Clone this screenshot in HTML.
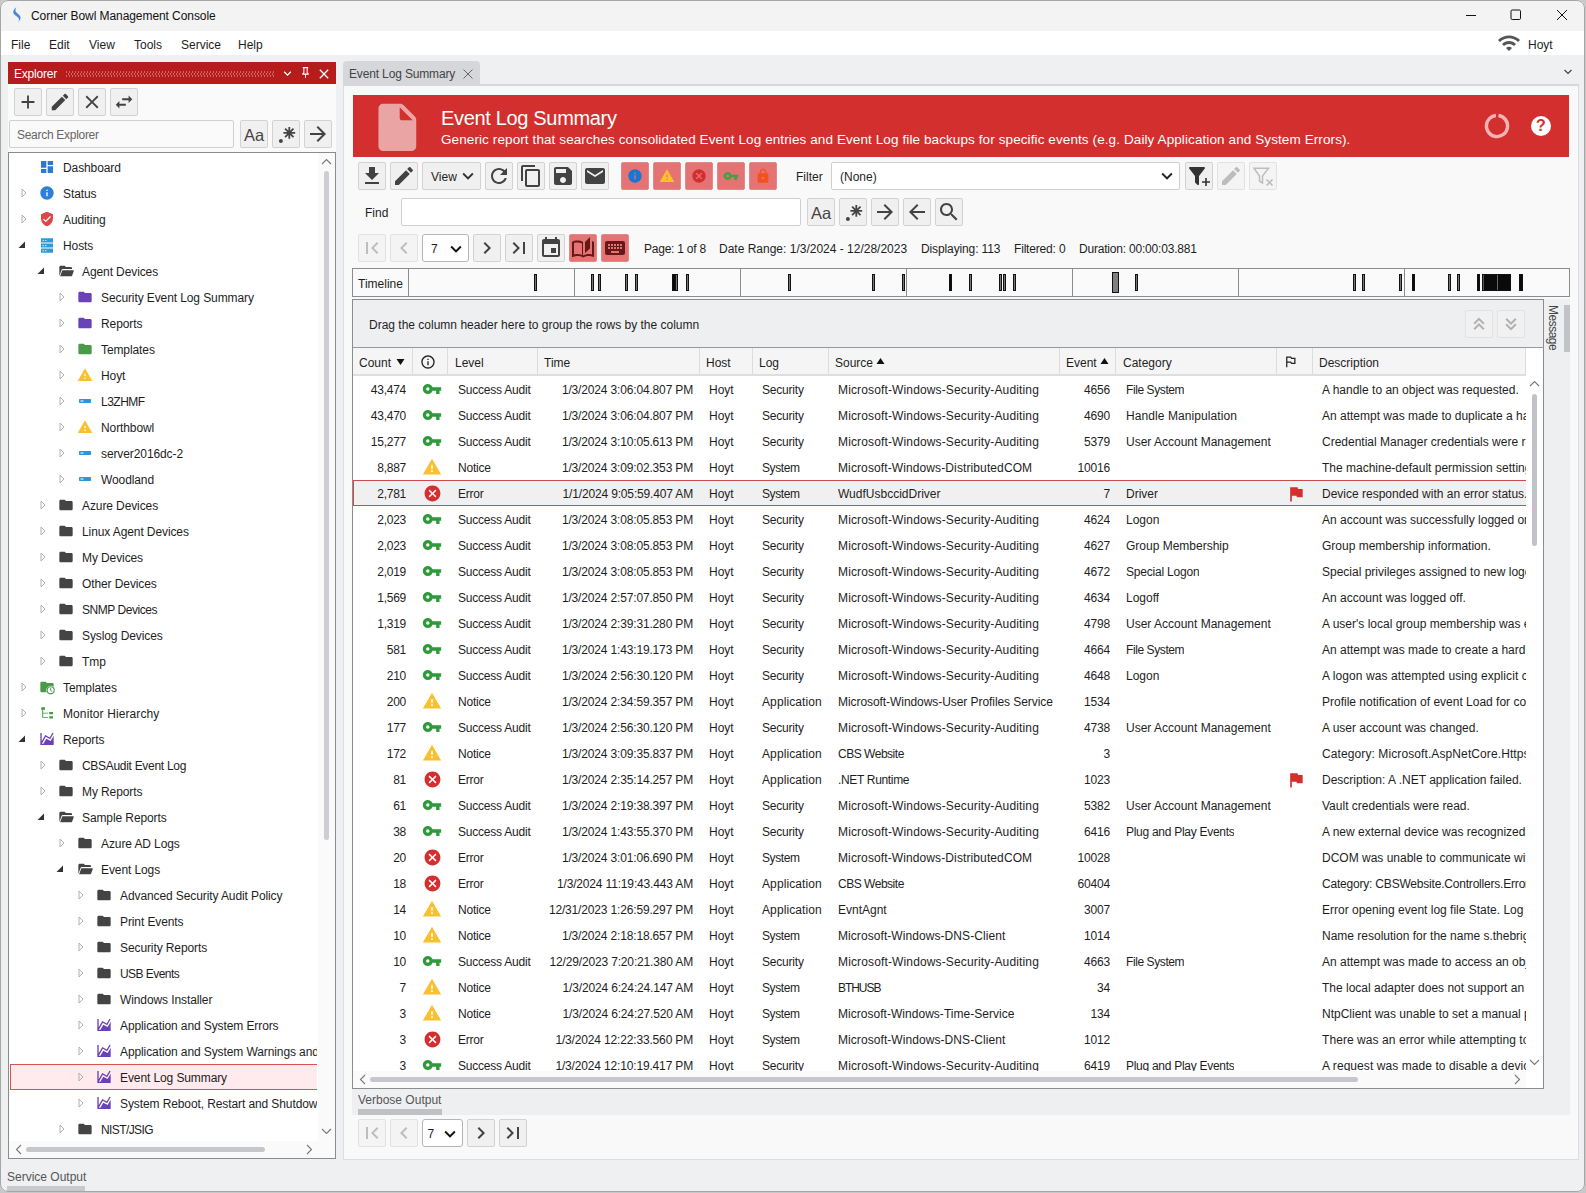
<!DOCTYPE html><html><head><meta charset="utf-8"><title>Corner Bowl Management Console</title><style>
*{box-sizing:border-box;margin:0;padding:0}
html,body{width:1586px;height:1193px;overflow:hidden;background:#eef0f2}
body{font-family:"Liberation Sans",sans-serif;font-size:12px;color:#1e1e1e;position:relative}
.a{position:absolute}
.ic{position:absolute;display:block}
.t{position:absolute;white-space:nowrap;line-height:16px;height:16px}
.btn{position:absolute;width:28px;height:28px;background:#f0f0f0;border:1px solid #d2d2d2;border-radius:2px}
.btn.dis{background:#f4f4f4;border-color:#e2e2e2}
.btn.tog{background:#e57373;border-color:#e08a8a}
.btn .ic{left:1px;top:1px}
.row{position:absolute;left:0;height:26px;width:100%}
.c{position:absolute;top:6px;height:16px;line-height:16px;white-space:nowrap;overflow:hidden}
.r{text-align:right}
.tr{position:absolute;left:0;width:308px;height:26px;letter-spacing:-0.100px}
.hd{position:absolute;top:0;height:26px;border-right:1px solid #dcdcdc}
.hd span{position:absolute;top:7px;left:6px;line-height:16px;white-space:nowrap}
.tick{position:absolute;top:7px;height:16px;background:#111;border:1px solid #444}
</style></head><body>
<div class="a" style="left:0px;top:0px;width:1586px;height:31px;background:#f3f3f3"></div>
<div class="a" style="left:0px;top:31px;width:1586px;height:24px;background:#fff"></div>
<svg class="ic" style="left:0;top:0" width="30" height="30" viewBox="0 0 30 30"><path d="M16.500 7C14 9 12.500 11.500 13.500 13.500C14.500 15.500 18 16.500 18.800 18.500C19.300 19.800 18.800 21 18 22.200C20 20.500 21 18.500 20.300 16.500C19.500 14.300 16.300 13.300 15.600 11.300C15.200 10 15.600 8.500 16.500 7Z" fill="#4a8ad4"/></svg>
<div class="t" style="left:31px;top:8px;color:#111;letter-spacing:-0.070px">Corner Bowl Management Console</div>
<div class="a" style="left:1466px;top:15px;width:10px;height:1px;background:#111"></div>
<svg class="ic" style="left:1510px;top:9px" width="12" height="12" viewBox="0 0 12 12"><rect x="1" y="1" width="9.500" height="9.500" rx="1.200" stroke="#111" stroke-width="1" fill="none"/></svg>
<svg class="ic" style="left:1556px;top:9px" width="12" height="12" viewBox="0 0 12 12"><path d="M1 1l10 10M11 1L1 11" stroke="#111" stroke-width="1" fill="none"/></svg>
<div class="t" style="left:11px;top:37px;">File</div>
<div class="t" style="left:49px;top:37px;">Edit</div>
<div class="t" style="left:89px;top:37px;">View</div>
<div class="t" style="left:134px;top:37px;">Tools</div>
<div class="t" style="left:181px;top:37px;">Service</div>
<div class="t" style="left:238px;top:37px;">Help</div>
<svg class="ic" style="left:1496.5px;top:31px" width="24" height="24" viewBox="0 0 24 24"><path fill="#555" d="M1 9l2 2c4.97-4.97 13.03-4.97 18 0l2-2C16.93 2.93 7.08 2.93 1 9zm8 8l3 3 3-3c-1.65-1.66-4.34-1.66-6 0zm-4-4l2 2c2.76-2.76 7.24-2.76 10 0l2-2C15.14 9.14 8.87 9.14 5 13z"/></svg>
<div class="t" style="left:1528px;top:37px;">Hoyt</div>
<div class="a" style="left:8px;top:62px;width:328px;height:1097px;background:#fafafa"></div>
<div class="a" style="left:8px;top:62px;width:328px;height:22px;background:#b71c1c"></div>
<div class="t" style="left:14px;top:66px;color:#fff;letter-spacing:-0.200px">Explorer</div>
<div class="a" style="left:66px;top:71px;width:209px;height:6px;background-image:radial-gradient(circle at 0.750px 1px,#dc7c7c 0.500px,transparent 0.750px),radial-gradient(circle at 2.250px 3px,#dc7c7c 0.500px,transparent 0.750px);background-size:3px 4px"></div>
<svg class="ic" style="left:279.5px;top:66px" width="15" height="15" viewBox="0 0 24 24"><path fill="#fff" d="M7.41 8.59L12 13.17l4.59-4.58L18 10l-6 6-6-6 1.41-1.41z"/></svg>
<svg class="ic" style="left:298.5px;top:65.5px" width="13" height="13" viewBox="0 0 24 24"><path fill="#fff" d="M16,12V4H17V2H7V4H8V12L6,14V16H11.2V22H12.8V16H18V14L16,12M8.8,14L10,12.8V4H14V12.8L15.2,14H8.800Z"/></svg>
<svg class="ic" style="left:316px;top:65.5px" width="16" height="16" viewBox="0 0 24 24"><path fill="#fff" d="M19 6.41L17.59 5 12 10.59 6.41 5 5 6.41 10.59 12 5 17.59 6.41 19 12 13.41 17.59 19 19 17.59 13.41 12z"/></svg>
<div class="btn " style="left:14px;top:88px;width:28px">
<svg class="ic" style="left:2px;top:2px" width="22" height="22" viewBox="0 0 24 24"><path fill="#424242" d="M19 13h-6v6h-2v-6H5v-2h6V5h2v6h6v2z"/></svg>
</div>
<div class="btn " style="left:46px;top:88px;width:28px">
<svg class="ic" style="left:2px;top:2px" width="22" height="22" viewBox="0 0 24 24"><path fill="#424242" d="M3 17.25V21h3.75L17.81 9.94l-3.75-3.75L3 17.25zM20.71 7.04c.39-.39.39-1.02 0-1.41l-2.34-2.34c-.39-.39-1.02-.39-1.41 0l-1.83 1.83 3.75 3.75 1.83-1.83z"/></svg>
</div>
<div class="btn " style="left:78px;top:88px;width:28px">
<svg class="ic" style="left:2px;top:2px" width="22" height="22" viewBox="0 0 24 24"><path fill="#424242" d="M19 6.41L17.59 5 12 10.59 6.41 5 5 6.41 10.59 12 5 17.59 6.41 19 12 13.41 17.59 19 19 17.59 13.41 12z"/></svg>
</div>
<div class="btn " style="left:110px;top:88px;width:28px">
<svg class="ic" style="left:2px;top:2px" width="22" height="22" viewBox="0 0 24 24"><path fill="#424242" d="M6.99 11L3 15l3.99 4v-3H14v-2H6.99v-3zM21 9l-3.99-4v3H10v2h7.01v3L21 9z"/></svg>
</div>
<div class="a" style="left:9px;top:120px;width:225px;height:28px;background:#fafafa;border:1px solid #d0d0d0;border-radius:2px"></div>
<div class="t" style="left:17px;top:127px;color:#666;letter-spacing:-0.290px">Search Explorer</div>
<div class="btn " style="left:240px;top:120px;width:28px">
<div class="t" style="left:3px;top:4px;font-size:16.500px;line-height:20px;height:20px;color:#444">Aa</div>
</div>
<div class="btn " style="left:272px;top:120px;width:28px">
<svg class="ic" style="left:1px;top:1px" width="24" height="24" viewBox="0 0 24 24"><circle cx="6.900" cy="18.900" r="2" fill="#444"/><path d="M15.300 5v11.800M9.400 10.900h11.800M11.100 6.700l8.400 8.400M19.500 6.700l-8.400 8.400" stroke="#444" stroke-width="1.800" fill="none"/></svg>
</div>
<div class="btn " style="left:304px;top:120px;width:28px">
<svg class="ic" style="left:1px;top:1px" width="24" height="24" viewBox="0 0 24 24"><path fill="#424242" d="M12 4l-1.41 1.41L16.17 11H4v2h12.17l-5.58 5.59L12 20l8-8z"/></svg>
</div>
<div class="a" style="left:8px;top:152px;width:328px;height:1007px;background:#fff;border:1px solid #8c8c8c"></div>
<div class="a" style="left:10px;top:154px;width:307px;height:987px;overflow:hidden">
<div class="tr" style="top:0px;">
<svg class="ic" style="left:29px;top:5px" width="16" height="16" viewBox="0 0 24 24"><path fill="#2979d6" d="M3 13h8V3H3v10zm0 8h8v-6H3v6zm10 0h8V11h-8v10zm0-18v6h8V3h-8z"/></svg>
<div class="t" style="left:53px;top:6px">Dashboard</div>
</div>
<div class="tr" style="top:26px;">
<svg class="ic" style="left:9px;top:7px" width="10" height="12" viewBox="0 0 10 12"><path d="M3 2L7 6 3 10z" fill="none" stroke="#b0b0b0" stroke-width="1"/></svg>
<svg class="ic" style="left:29px;top:5px" width="16" height="16" viewBox="0 0 24 24"><path fill="#2d7fd8" d="M12 2C6.48 2 2 6.48 2 12s4.48 10 10 10 10-4.48 10-10S17.52 2 12 2zm1 15h-2v-6h2v6zm0-8h-2V7h2v2z"/></svg>
<div class="t" style="left:53px;top:6px">Status</div>
</div>
<div class="tr" style="top:52px;">
<svg class="ic" style="left:9px;top:7px" width="10" height="12" viewBox="0 0 10 12"><path d="M3 2L7 6 3 10z" fill="none" stroke="#b0b0b0" stroke-width="1"/></svg>
<svg class="ic" style="left:29px;top:5px" width="16" height="16" viewBox="0 0 24 24"><path fill="#e04545" d="M12 1L3 5v6c0 5.55 3.84 10.74 9 12 5.16-1.26 9-6.45 9-12V5l-9-4zm-2 16l-4-4 1.41-1.41L10 14.17l6.59-6.59L18 9l-8 8z"/></svg>
<div class="t" style="left:53px;top:6px">Auditing</div>
</div>
<div class="tr" style="top:78px;">
<svg class="ic" style="left:7px;top:8px" width="10" height="10" viewBox="0 0 10 10"><path d="M8 1.500V8H1.500z" fill="#333"/></svg>
<svg class="ic" style="left:31px;top:6px" width="12" height="15" viewBox="0 0 12 15"><path fill="#2d9bd8" d="M0 .3h12v4.200H0zM0 5.400h12v4.200H0zM0 10.500h12v4.200H0z"/><path fill="#b5e0f5" d="M1.500 1.900h1.500v1.200H1.500zM4 1.900h1.500v1.200H4zM1.500 7h1.500v1.200H1.500zM4 7h1.500v1.200H4zM1.500 12.100h1.500v1.200H1.500zM4 12.100h1.500v1.200H4z"/></svg>
<div class="t" style="left:53px;top:6px">Hosts</div>
</div>
<div class="tr" style="top:104px;">
<svg class="ic" style="left:26px;top:8px" width="10" height="10" viewBox="0 0 10 10"><path d="M8 1.500V8H1.500z" fill="#333"/></svg>
<svg class="ic" style="left:48px;top:5px" width="16" height="16" viewBox="0 0 24 24"><path fill="#444" d="M2 6c0-1.1.9-2 2-2h6l2 2h7c1.1 0 2 .9 2 2v1H7.2c-.9 0-1.7.6-1.95 1.45L2 19.5V6zM3.2 20l3.1-8.6c.15-.25.45-.4.8-.4H23c.5 0 .85.5.7 1l-2.6 7.3c-.15.4-.55.7-1 .7H3.2z"/></svg>
<div class="t" style="left:72px;top:6px">Agent Devices</div>
</div>
<div class="tr" style="top:130px;">
<svg class="ic" style="left:47px;top:7px" width="10" height="12" viewBox="0 0 10 12"><path d="M3 2L7 6 3 10z" fill="none" stroke="#b0b0b0" stroke-width="1"/></svg>
<svg class="ic" style="left:67px;top:5px" width="16" height="16" viewBox="0 0 24 24"><path fill="#6a42b8" d="M10 4H4c-1.1 0-1.99.9-1.99 2L2 18c0 1.1.9 2 2 2h16c1.1 0 2-.9 2-2V8c0-1.1-.9-2-2-2h-8l-2-2z"/></svg>
<div class="t" style="left:91px;top:6px">Security Event Log Summary</div>
</div>
<div class="tr" style="top:156px;">
<svg class="ic" style="left:47px;top:7px" width="10" height="12" viewBox="0 0 10 12"><path d="M3 2L7 6 3 10z" fill="none" stroke="#b0b0b0" stroke-width="1"/></svg>
<svg class="ic" style="left:67px;top:5px" width="16" height="16" viewBox="0 0 24 24"><path fill="#6a42b8" d="M10 4H4c-1.1 0-1.99.9-1.99 2L2 18c0 1.1.9 2 2 2h16c1.1 0 2-.9 2-2V8c0-1.1-.9-2-2-2h-8l-2-2z"/></svg>
<div class="t" style="left:91px;top:6px">Reports</div>
</div>
<div class="tr" style="top:182px;">
<svg class="ic" style="left:47px;top:7px" width="10" height="12" viewBox="0 0 10 12"><path d="M3 2L7 6 3 10z" fill="none" stroke="#b0b0b0" stroke-width="1"/></svg>
<svg class="ic" style="left:67px;top:5px" width="16" height="16" viewBox="0 0 24 24"><path fill="#4a9a4a" d="M10 4H4c-1.1 0-1.99.9-1.99 2L2 18c0 1.1.9 2 2 2h16c1.1 0 2-.9 2-2V8c0-1.1-.9-2-2-2h-8l-2-2z"/></svg>
<div class="t" style="left:91px;top:6px">Templates</div>
</div>
<div class="tr" style="top:208px;">
<svg class="ic" style="left:47px;top:7px" width="10" height="12" viewBox="0 0 10 12"><path d="M3 2L7 6 3 10z" fill="none" stroke="#b0b0b0" stroke-width="1"/></svg>
<svg class="ic" style="left:67px;top:5px" width="16" height="16" viewBox="0 0 24 24"><path fill="#fbc02d" d="M1 21h22L12 2 1 21zm12-3h-2v-2h2v2zm0-4h-2v-4h2v4z"/></svg>
<div class="t" style="left:91px;top:6px">Hoyt</div>
</div>
<div class="tr" style="top:234px;">
<svg class="ic" style="left:47px;top:7px" width="10" height="12" viewBox="0 0 10 12"><path d="M3 2L7 6 3 10z" fill="none" stroke="#b0b0b0" stroke-width="1"/></svg>
<svg class="ic" style="left:67px;top:5px" width="16" height="16" viewBox="0 0 24 24"><path fill="#2d96d8" d="M4 9h16c.55 0 1 .45 1 1v4c0 .55-.45 1-1 1H4c-.55 0-1-.45-1-1v-4c0-.55.45-1 1-1zm1.500 2v2h1.500v-2zm2.500 0v2h1.500v-2z"/></svg>
<div class="t" style="left:91px;top:6px;letter-spacing:-0.500px">L3ZHMF</div>
</div>
<div class="tr" style="top:260px;">
<svg class="ic" style="left:47px;top:7px" width="10" height="12" viewBox="0 0 10 12"><path d="M3 2L7 6 3 10z" fill="none" stroke="#b0b0b0" stroke-width="1"/></svg>
<svg class="ic" style="left:67px;top:5px" width="16" height="16" viewBox="0 0 24 24"><path fill="#fbc02d" d="M1 21h22L12 2 1 21zm12-3h-2v-2h2v2zm0-4h-2v-4h2v4z"/></svg>
<div class="t" style="left:91px;top:6px">Northbowl</div>
</div>
<div class="tr" style="top:286px;">
<svg class="ic" style="left:47px;top:7px" width="10" height="12" viewBox="0 0 10 12"><path d="M3 2L7 6 3 10z" fill="none" stroke="#b0b0b0" stroke-width="1"/></svg>
<svg class="ic" style="left:67px;top:5px" width="16" height="16" viewBox="0 0 24 24"><path fill="#2d96d8" d="M4 9h16c.55 0 1 .45 1 1v4c0 .55-.45 1-1 1H4c-.55 0-1-.45-1-1v-4c0-.55.45-1 1-1zm1.500 2v2h1.500v-2zm2.500 0v2h1.500v-2z"/></svg>
<div class="t" style="left:91px;top:6px">server2016dc-2</div>
</div>
<div class="tr" style="top:312px;">
<svg class="ic" style="left:47px;top:7px" width="10" height="12" viewBox="0 0 10 12"><path d="M3 2L7 6 3 10z" fill="none" stroke="#b0b0b0" stroke-width="1"/></svg>
<svg class="ic" style="left:67px;top:5px" width="16" height="16" viewBox="0 0 24 24"><path fill="#2d96d8" d="M4 9h16c.55 0 1 .45 1 1v4c0 .55-.45 1-1 1H4c-.55 0-1-.45-1-1v-4c0-.55.45-1 1-1zm1.500 2v2h1.500v-2zm2.500 0v2h1.500v-2z"/></svg>
<div class="t" style="left:91px;top:6px">Woodland</div>
</div>
<div class="tr" style="top:338px;">
<svg class="ic" style="left:28px;top:7px" width="10" height="12" viewBox="0 0 10 12"><path d="M3 2L7 6 3 10z" fill="none" stroke="#b0b0b0" stroke-width="1"/></svg>
<svg class="ic" style="left:48px;top:5px" width="16" height="16" viewBox="0 0 24 24"><path fill="#444" d="M10 4H4c-1.1 0-1.99.9-1.99 2L2 18c0 1.1.9 2 2 2h16c1.1 0 2-.9 2-2V8c0-1.1-.9-2-2-2h-8l-2-2z"/></svg>
<div class="t" style="left:72px;top:6px">Azure Devices</div>
</div>
<div class="tr" style="top:364px;">
<svg class="ic" style="left:28px;top:7px" width="10" height="12" viewBox="0 0 10 12"><path d="M3 2L7 6 3 10z" fill="none" stroke="#b0b0b0" stroke-width="1"/></svg>
<svg class="ic" style="left:48px;top:5px" width="16" height="16" viewBox="0 0 24 24"><path fill="#444" d="M10 4H4c-1.1 0-1.99.9-1.99 2L2 18c0 1.1.9 2 2 2h16c1.1 0 2-.9 2-2V8c0-1.1-.9-2-2-2h-8l-2-2z"/></svg>
<div class="t" style="left:72px;top:6px">Linux Agent Devices</div>
</div>
<div class="tr" style="top:390px;">
<svg class="ic" style="left:28px;top:7px" width="10" height="12" viewBox="0 0 10 12"><path d="M3 2L7 6 3 10z" fill="none" stroke="#b0b0b0" stroke-width="1"/></svg>
<svg class="ic" style="left:48px;top:5px" width="16" height="16" viewBox="0 0 24 24"><path fill="#444" d="M10 4H4c-1.1 0-1.99.9-1.99 2L2 18c0 1.1.9 2 2 2h16c1.1 0 2-.9 2-2V8c0-1.1-.9-2-2-2h-8l-2-2z"/></svg>
<div class="t" style="left:72px;top:6px">My Devices</div>
</div>
<div class="tr" style="top:416px;">
<svg class="ic" style="left:28px;top:7px" width="10" height="12" viewBox="0 0 10 12"><path d="M3 2L7 6 3 10z" fill="none" stroke="#b0b0b0" stroke-width="1"/></svg>
<svg class="ic" style="left:48px;top:5px" width="16" height="16" viewBox="0 0 24 24"><path fill="#444" d="M10 4H4c-1.1 0-1.99.9-1.99 2L2 18c0 1.1.9 2 2 2h16c1.1 0 2-.9 2-2V8c0-1.1-.9-2-2-2h-8l-2-2z"/></svg>
<div class="t" style="left:72px;top:6px">Other Devices</div>
</div>
<div class="tr" style="top:442px;">
<svg class="ic" style="left:28px;top:7px" width="10" height="12" viewBox="0 0 10 12"><path d="M3 2L7 6 3 10z" fill="none" stroke="#b0b0b0" stroke-width="1"/></svg>
<svg class="ic" style="left:48px;top:5px" width="16" height="16" viewBox="0 0 24 24"><path fill="#444" d="M10 4H4c-1.1 0-1.99.9-1.99 2L2 18c0 1.1.9 2 2 2h16c1.1 0 2-.9 2-2V8c0-1.1-.9-2-2-2h-8l-2-2z"/></svg>
<div class="t" style="left:72px;top:6px;letter-spacing:-0.450px">SNMP Devices</div>
</div>
<div class="tr" style="top:468px;">
<svg class="ic" style="left:28px;top:7px" width="10" height="12" viewBox="0 0 10 12"><path d="M3 2L7 6 3 10z" fill="none" stroke="#b0b0b0" stroke-width="1"/></svg>
<svg class="ic" style="left:48px;top:5px" width="16" height="16" viewBox="0 0 24 24"><path fill="#444" d="M10 4H4c-1.1 0-1.99.9-1.99 2L2 18c0 1.1.9 2 2 2h16c1.1 0 2-.9 2-2V8c0-1.1-.9-2-2-2h-8l-2-2z"/></svg>
<div class="t" style="left:72px;top:6px">Syslog Devices</div>
</div>
<div class="tr" style="top:494px;">
<svg class="ic" style="left:28px;top:7px" width="10" height="12" viewBox="0 0 10 12"><path d="M3 2L7 6 3 10z" fill="none" stroke="#b0b0b0" stroke-width="1"/></svg>
<svg class="ic" style="left:48px;top:5px" width="16" height="16" viewBox="0 0 24 24"><path fill="#444" d="M10 4H4c-1.1 0-1.99.9-1.99 2L2 18c0 1.1.9 2 2 2h16c1.1 0 2-.9 2-2V8c0-1.1-.9-2-2-2h-8l-2-2z"/></svg>
<div class="t" style="left:72px;top:6px">Tmp</div>
</div>
<div class="tr" style="top:520px;">
<svg class="ic" style="left:9px;top:7px" width="10" height="12" viewBox="0 0 10 12"><path d="M3 2L7 6 3 10z" fill="none" stroke="#b0b0b0" stroke-width="1"/></svg>
<svg class="ic" style="left:29px;top:5px" width="16" height="16" viewBox="0 0 24 24"><path fill="#4a9a4a" d="M10 4H4c-1.100 0-2 .9-2 2v12c0 1.100.9 2 2 2h7.500a7 7 0 0 1 10.500-8.500V8c0-1.100-.9-2-2-2h-8l-2-2z"/><circle cx="17.500" cy="17" r="5.300" fill="#fff" stroke="#4a9a4a" stroke-width="1.700"/><path d="M17.500 13.800V17.300l2.300 1.400" stroke="#4a9a4a" stroke-width="1.500" fill="none"/></svg>
<div class="t" style="left:53px;top:6px">Templates</div>
</div>
<div class="tr" style="top:546px;">
<svg class="ic" style="left:9px;top:7px" width="10" height="12" viewBox="0 0 10 12"><path d="M3 2L7 6 3 10z" fill="none" stroke="#b0b0b0" stroke-width="1"/></svg>
<svg class="ic" style="left:31px;top:7px" width="12" height="12" viewBox="0 0 12 12"><path fill="#4a9a4a" d="M.2.200h3.800v2.600H.2zM1.200 2.800h1v8h-1zM2.200 5.700h5v.9h-5zM2.200 9.900h5v.9h-5zM8.200 5h3.800v2.300H8.200zM8.200 9.200h3.800v2.300H8.200z"/></svg>
<div class="t" style="left:53px;top:6px;letter-spacing:0.100px">Monitor Hierarchy</div>
</div>
<div class="tr" style="top:572px;">
<svg class="ic" style="left:7px;top:8px" width="10" height="10" viewBox="0 0 10 10"><path d="M8 1.500V8H1.500z" fill="#333"/></svg>
<svg class="ic" style="left:29px;top:5px" width="16" height="16" viewBox="0 0 24 24"><path fill="#6a42b8" d="M17.45,15.18L22,7.31V19L22,21H2V3H4V15.54L9.5,6L16,9.78L20.24,2.45L21.97,3.45L16.74,12.5L10.23,8.75L4.31,19H6.57L10.96,11.44L17.45,15.18Z"/></svg>
<div class="t" style="left:53px;top:6px">Reports</div>
</div>
<div class="tr" style="top:598px;">
<svg class="ic" style="left:28px;top:7px" width="10" height="12" viewBox="0 0 10 12"><path d="M3 2L7 6 3 10z" fill="none" stroke="#b0b0b0" stroke-width="1"/></svg>
<svg class="ic" style="left:48px;top:5px" width="16" height="16" viewBox="0 0 24 24"><path fill="#444" d="M10 4H4c-1.1 0-1.99.9-1.99 2L2 18c0 1.1.9 2 2 2h16c1.1 0 2-.9 2-2V8c0-1.1-.9-2-2-2h-8l-2-2z"/></svg>
<div class="t" style="left:72px;top:6px;letter-spacing:-0.300px">CBSAudit Event Log</div>
</div>
<div class="tr" style="top:624px;">
<svg class="ic" style="left:28px;top:7px" width="10" height="12" viewBox="0 0 10 12"><path d="M3 2L7 6 3 10z" fill="none" stroke="#b0b0b0" stroke-width="1"/></svg>
<svg class="ic" style="left:48px;top:5px" width="16" height="16" viewBox="0 0 24 24"><path fill="#444" d="M10 4H4c-1.1 0-1.99.9-1.99 2L2 18c0 1.1.9 2 2 2h16c1.1 0 2-.9 2-2V8c0-1.1-.9-2-2-2h-8l-2-2z"/></svg>
<div class="t" style="left:72px;top:6px">My Reports</div>
</div>
<div class="tr" style="top:650px;">
<svg class="ic" style="left:26px;top:8px" width="10" height="10" viewBox="0 0 10 10"><path d="M8 1.500V8H1.500z" fill="#333"/></svg>
<svg class="ic" style="left:48px;top:5px" width="16" height="16" viewBox="0 0 24 24"><path fill="#444" d="M2 6c0-1.1.9-2 2-2h6l2 2h7c1.1 0 2 .9 2 2v1H7.2c-.9 0-1.7.6-1.95 1.45L2 19.5V6zM3.2 20l3.1-8.6c.15-.25.45-.4.8-.4H23c.5 0 .85.5.7 1l-2.6 7.3c-.15.4-.55.7-1 .7H3.2z"/></svg>
<div class="t" style="left:72px;top:6px">Sample Reports</div>
</div>
<div class="tr" style="top:676px;">
<svg class="ic" style="left:47px;top:7px" width="10" height="12" viewBox="0 0 10 12"><path d="M3 2L7 6 3 10z" fill="none" stroke="#b0b0b0" stroke-width="1"/></svg>
<svg class="ic" style="left:67px;top:5px" width="16" height="16" viewBox="0 0 24 24"><path fill="#444" d="M10 4H4c-1.1 0-1.99.9-1.99 2L2 18c0 1.1.9 2 2 2h16c1.1 0 2-.9 2-2V8c0-1.1-.9-2-2-2h-8l-2-2z"/></svg>
<div class="t" style="left:91px;top:6px">Azure AD Logs</div>
</div>
<div class="tr" style="top:702px;">
<svg class="ic" style="left:45px;top:8px" width="10" height="10" viewBox="0 0 10 10"><path d="M8 1.500V8H1.500z" fill="#333"/></svg>
<svg class="ic" style="left:67px;top:5px" width="16" height="16" viewBox="0 0 24 24"><path fill="#444" d="M2 6c0-1.1.9-2 2-2h6l2 2h7c1.1 0 2 .9 2 2v1H7.2c-.9 0-1.7.6-1.95 1.45L2 19.5V6zM3.2 20l3.1-8.6c.15-.25.45-.4.8-.4H23c.5 0 .85.5.7 1l-2.6 7.3c-.15.4-.55.7-1 .7H3.2z"/></svg>
<div class="t" style="left:91px;top:6px">Event Logs</div>
</div>
<div class="tr" style="top:728px;">
<svg class="ic" style="left:66px;top:7px" width="10" height="12" viewBox="0 0 10 12"><path d="M3 2L7 6 3 10z" fill="none" stroke="#b0b0b0" stroke-width="1"/></svg>
<svg class="ic" style="left:86px;top:5px" width="16" height="16" viewBox="0 0 24 24"><path fill="#444" d="M10 4H4c-1.1 0-1.99.9-1.99 2L2 18c0 1.1.9 2 2 2h16c1.1 0 2-.9 2-2V8c0-1.1-.9-2-2-2h-8l-2-2z"/></svg>
<div class="t" style="left:110px;top:6px">Advanced Security Audit Policy</div>
</div>
<div class="tr" style="top:754px;">
<svg class="ic" style="left:66px;top:7px" width="10" height="12" viewBox="0 0 10 12"><path d="M3 2L7 6 3 10z" fill="none" stroke="#b0b0b0" stroke-width="1"/></svg>
<svg class="ic" style="left:86px;top:5px" width="16" height="16" viewBox="0 0 24 24"><path fill="#444" d="M10 4H4c-1.1 0-1.99.9-1.99 2L2 18c0 1.1.9 2 2 2h16c1.1 0 2-.9 2-2V8c0-1.1-.9-2-2-2h-8l-2-2z"/></svg>
<div class="t" style="left:110px;top:6px">Print Events</div>
</div>
<div class="tr" style="top:780px;">
<svg class="ic" style="left:66px;top:7px" width="10" height="12" viewBox="0 0 10 12"><path d="M3 2L7 6 3 10z" fill="none" stroke="#b0b0b0" stroke-width="1"/></svg>
<svg class="ic" style="left:86px;top:5px" width="16" height="16" viewBox="0 0 24 24"><path fill="#444" d="M10 4H4c-1.1 0-1.99.9-1.99 2L2 18c0 1.1.9 2 2 2h16c1.1 0 2-.9 2-2V8c0-1.1-.9-2-2-2h-8l-2-2z"/></svg>
<div class="t" style="left:110px;top:6px">Security Reports</div>
</div>
<div class="tr" style="top:806px;">
<svg class="ic" style="left:66px;top:7px" width="10" height="12" viewBox="0 0 10 12"><path d="M3 2L7 6 3 10z" fill="none" stroke="#b0b0b0" stroke-width="1"/></svg>
<svg class="ic" style="left:86px;top:5px" width="16" height="16" viewBox="0 0 24 24"><path fill="#444" d="M10 4H4c-1.1 0-1.99.9-1.99 2L2 18c0 1.1.9 2 2 2h16c1.1 0 2-.9 2-2V8c0-1.1-.9-2-2-2h-8l-2-2z"/></svg>
<div class="t" style="left:110px;top:6px;letter-spacing:-0.550px">USB Events</div>
</div>
<div class="tr" style="top:832px;">
<svg class="ic" style="left:66px;top:7px" width="10" height="12" viewBox="0 0 10 12"><path d="M3 2L7 6 3 10z" fill="none" stroke="#b0b0b0" stroke-width="1"/></svg>
<svg class="ic" style="left:86px;top:5px" width="16" height="16" viewBox="0 0 24 24"><path fill="#444" d="M10 4H4c-1.1 0-1.99.9-1.99 2L2 18c0 1.1.9 2 2 2h16c1.1 0 2-.9 2-2V8c0-1.1-.9-2-2-2h-8l-2-2z"/></svg>
<div class="t" style="left:110px;top:6px">Windows Installer</div>
</div>
<div class="tr" style="top:858px;">
<svg class="ic" style="left:66px;top:7px" width="10" height="12" viewBox="0 0 10 12"><path d="M3 2L7 6 3 10z" fill="none" stroke="#b0b0b0" stroke-width="1"/></svg>
<svg class="ic" style="left:86px;top:5px" width="16" height="16" viewBox="0 0 24 24"><path fill="#6a42b8" d="M17.45,15.18L22,7.31V19L22,21H2V3H4V15.54L9.5,6L16,9.78L20.24,2.45L21.97,3.45L16.74,12.5L10.23,8.75L4.31,19H6.57L10.96,11.44L17.45,15.18Z"/></svg>
<div class="t" style="left:110px;top:6px">Application and System Errors</div>
</div>
<div class="tr" style="top:884px;">
<svg class="ic" style="left:66px;top:7px" width="10" height="12" viewBox="0 0 10 12"><path d="M3 2L7 6 3 10z" fill="none" stroke="#b0b0b0" stroke-width="1"/></svg>
<svg class="ic" style="left:86px;top:5px" width="16" height="16" viewBox="0 0 24 24"><path fill="#6a42b8" d="M17.45,15.18L22,7.31V19L22,21H2V3H4V15.54L9.5,6L16,9.78L20.24,2.45L21.97,3.45L16.74,12.5L10.23,8.75L4.31,19H6.57L10.96,11.44L17.45,15.18Z"/></svg>
<div class="t" style="left:110px;top:6px">Application and System Warnings and Errors</div>
</div>
<div class="tr" style="top:910px;background:#ffebee;border:1px solid #d9534f;width:330px;">
<svg class="ic" style="left:65px;top:6px" width="10" height="12" viewBox="0 0 10 12"><path d="M3 2L7 6 3 10z" fill="none" stroke="#b0b0b0" stroke-width="1"/></svg>
<svg class="ic" style="left:85px;top:4px" width="16" height="16" viewBox="0 0 24 24"><path fill="#6a42b8" d="M17.45,15.18L22,7.31V19L22,21H2V3H4V15.54L9.5,6L16,9.78L20.24,2.45L21.97,3.45L16.74,12.5L10.23,8.75L4.31,19H6.57L10.96,11.44L17.45,15.18Z"/></svg>
<div class="t" style="left:109px;top:5px">Event Log Summary</div>
</div>
<div class="tr" style="top:936px;">
<svg class="ic" style="left:66px;top:7px" width="10" height="12" viewBox="0 0 10 12"><path d="M3 2L7 6 3 10z" fill="none" stroke="#b0b0b0" stroke-width="1"/></svg>
<svg class="ic" style="left:86px;top:5px" width="16" height="16" viewBox="0 0 24 24"><path fill="#6a42b8" d="M17.45,15.18L22,7.31V19L22,21H2V3H4V15.54L9.5,6L16,9.78L20.24,2.45L21.97,3.45L16.74,12.5L10.23,8.75L4.31,19H6.57L10.96,11.44L17.45,15.18Z"/></svg>
<div class="t" style="left:110px;top:6px">System Reboot, Restart and Shutdown</div>
</div>
<div class="tr" style="top:962px;">
<svg class="ic" style="left:47px;top:7px" width="10" height="12" viewBox="0 0 10 12"><path d="M3 2L7 6 3 10z" fill="none" stroke="#b0b0b0" stroke-width="1"/></svg>
<svg class="ic" style="left:67px;top:5px" width="16" height="16" viewBox="0 0 24 24"><path fill="#444" d="M10 4H4c-1.1 0-1.99.9-1.99 2L2 18c0 1.1.9 2 2 2h16c1.1 0 2-.9 2-2V8c0-1.1-.9-2-2-2h-8l-2-2z"/></svg>
<div class="t" style="left:91px;top:6px;letter-spacing:-0.600px">NIST/JSIG</div>
</div>
</div>
<div class="a" style="left:318px;top:153px;width:17px;height:1005px;background:#fafafa"></div>
<div class="a" style="left:9px;top:1141px;width:309px;height:17px;background:#fafafa"></div>
<svg class="ic" style="left:321px;top:157px" width="11" height="9" viewBox="0 0 11 9"><path d="M1 7l4.500-4.500L10 7" stroke="#777" stroke-width="1.100" fill="none"/></svg>
<svg class="ic" style="left:321px;top:1127px" width="11" height="9" viewBox="0 0 11 9"><path d="M1 2l4.500 4.500L10 2" stroke="#777" stroke-width="1.100" fill="none"/></svg>
<div class="a" style="left:324px;top:171px;width:5px;height:669px;background:#cdced2;border-radius:3px"></div>
<svg class="ic" style="left:14px;top:1144px" width="9" height="11" viewBox="0 0 9 11"><path d="M7 1L2.500 5.500 7 10" stroke="#777" stroke-width="1.100" fill="none"/></svg>
<svg class="ic" style="left:305px;top:1144px" width="9" height="11" viewBox="0 0 9 11"><path d="M2 1l4.500 4.500L2 10" stroke="#777" stroke-width="1.100" fill="none"/></svg>
<div class="a" style="left:26px;top:1147px;width:239px;height:5px;background:#c6c7cc;border-radius:2.500px"></div>
<div class="t" style="left:7px;top:1169px;color:#555">Service Output</div>
<div class="a" style="left:7px;top:1186px;width:78px;height:7px;background:#c8c9cc"></div>
<div class="a" style="left:343px;top:61px;width:137px;height:26px;background:#d5d7db;border-radius:4px 4px 0 0"></div>
<div class="t" style="left:349px;top:66px;color:#444;letter-spacing:-0.150px">Event Log Summary</div>
<svg class="ic" style="left:462px;top:68px" width="12" height="12" viewBox="0 0 12 12"><path d="M1.500 1.500l9 9M10.500 1.500l-9 9" stroke="#666" stroke-width="1" fill="none"/></svg>
<svg class="ic" style="left:1563px;top:68px" width="10" height="8" viewBox="0 0 10 8"><path d="M1.500 2L5 5.500 8.500 2" stroke="#444" stroke-width="1.200" fill="none"/></svg>
<div class="a" style="left:343px;top:84px;width:1236px;height:3px;background:#d5d7db"></div>
<div class="a" style="left:343px;top:86px;width:1236px;height:1074px;background:#f9f9f9;border:1px solid #dcdde0;border-top:none"></div>
<div class="a" style="left:353px;top:95px;width:1216px;height:62px;background:#d32f2f"></div>
<svg class="ic" style="left:368.650px;top:98.900px" width="56.700" height="56.700" viewBox="0 0 24 24"><path fill="#eba4a4" d="M6 2c-1.100 0-1.990.9-1.990 2L4 20c0 1.100.890 2 1.990 2H18c1.100 0 2-.9 2-2V8.830c0-.530-.210-1.040-.590-1.410l-4.830-4.830c-.370-.380-.880-.590-1.410-.590H6zm7 6V3.500L18.500 9H14c-.550 0-1-.450-1-1z"/></svg>
<div class="t" style="left:441px;top:105px;font-size:20px;line-height:26px;height:26px;color:#fff;letter-spacing:-0.330px">Event Log Summary</div>
<div class="t" style="left:441px;top:131px;font-size:13.500px;line-height:18px;height:18px;color:#fff;letter-spacing:0.100px">Generic report that searches consolidated Event Log entries and Event Log file backups for specific events (e.g. Daily Application and System Errors).</div>
<svg class="ic" style="left:1484px;top:113px" width="26" height="26" viewBox="0 0 26 26"><circle cx="13" cy="13" r="10.600" stroke="#f5b3b3" stroke-width="3.400" fill="none" stroke-dasharray="63.600 3" transform="rotate(-82 13 13)"/></svg>
<div class="a" style="left:1531px;top:116px;width:20px;height:20px;border-radius:10px;background:#fff"></div>
<div class="t" style="left:1531px;top:117px;width:20px;text-align:center;font-size:16px;font-weight:bold;line-height:18px;height:18px;color:#d32f2f">?</div>
<div class="btn " style="left:358px;top:162px;width:28px">
<svg class="ic" style="left:1px;top:1px" width="24" height="24" viewBox="0 0 24 24"><path fill="#424242" d="M19 9h-4V3H9v6H5l7 7 7-7zM5 18v2h14v-2H5z"/></svg>
</div>
<div class="btn " style="left:390px;top:162px;width:28px">
<svg class="ic" style="left:1px;top:1px" width="24" height="24" viewBox="0 0 24 24"><path fill="#424242" d="M3 17.25V21h3.75L17.81 9.94l-3.75-3.75L3 17.25zM20.71 7.04c.39-.39.39-1.02 0-1.41l-2.34-2.34c-.39-.39-1.02-.39-1.41 0l-1.83 1.83 3.75 3.75 1.83-1.83z"/></svg>
</div>
<div class="btn " style="left:422px;top:162px;width:59px">
<div class="t" style="left:8px;top:6px">View</div><svg class="ic" width="22" height="22" viewBox="0 0 24 24" style="left:34px;top:2px"><path fill="#333" d="M7.41 8.59L12 13.17l4.59-4.58L18 10l-6 6-6-6 1.41-1.41z"/></svg>
</div>
<div class="btn " style="left:485px;top:162px;width:28px">
<svg class="ic" style="left:1px;top:1px" width="24" height="24" viewBox="0 0 24 24"><path fill="#424242" d="M17.65 6.35C16.2 4.9 14.21 4 12 4c-4.42 0-7.99 3.58-7.99 8s3.57 8 7.99 8c3.73 0 6.84-2.55 7.73-6h-2.08c-.82 2.33-3.04 4-5.65 4-3.31 0-6-2.69-6-6s2.69-6 6-6c1.66 0 3.14.69 4.22 1.78L13 11h7V4l-2.35 2.35z"/></svg>
</div>
<div class="btn " style="left:517px;top:162px;width:28px">
<svg class="ic" style="left:1px;top:1px" width="24" height="24" viewBox="0 0 24 24"><path fill="#424242" d="M16 1H4c-1.1 0-2 .9-2 2v14h2V3h12V1zm3 4H8c-1.1 0-2 .9-2 2v14c0 1.1.9 2 2 2h11c1.1 0 2-.9 2-2V7c0-1.1-.9-2-2-2zm0 16H8V7h11v14z"/></svg>
</div>
<div class="btn " style="left:549px;top:162px;width:28px">
<svg class="ic" style="left:1px;top:1px" width="24" height="24" viewBox="0 0 24 24"><path fill="#424242" d="M17 3H5c-1.11 0-2 .9-2 2v14c0 1.1.89 2 2 2h14c1.1 0 2-.9 2-2V7l-4-4zm-5 16c-1.66 0-3-1.34-3-3s1.34-3 3-3 3 1.34 3 3-1.34 3-3 3zm3-10H5V5h10v4z"/></svg>
</div>
<div class="btn " style="left:581px;top:162px;width:28px">
<svg class="ic" style="left:1px;top:1px" width="24" height="24" viewBox="0 0 24 24"><path fill="#424242" d="M20 4H4c-1.1 0-1.99.9-1.99 2L2 18c0 1.1.9 2 2 2h16c1.1 0 2-.9 2-2V6c0-1.1-.9-2-2-2zm0 4l-8 5-8-5V6l8 5 8-5v2z"/></svg>
</div>
<div class="btn tog" style="left:621px;top:162px;width:28px">
<svg class="ic" style="left:5px;top:5px" width="16" height="16" viewBox="0 0 24 24"><path fill="#1976d2" d="M12 2C6.48 2 2 6.48 2 12s4.48 10 10 10 10-4.48 10-10S17.52 2 12 2zm1 15h-2v-6h2v6zm0-8h-2V7h2v2z"/></svg>
</div>
<div class="btn tog" style="left:653px;top:162px;width:28px">
<svg class="ic" style="left:5px;top:5px" width="16" height="16" viewBox="0 0 24 24"><path fill="#fbc02d" d="M1 21h22L12 2 1 21zm12-3h-2v-2h2v2zm0-4h-2v-4h2v4z"/></svg>
</div>
<div class="btn tog" style="left:685px;top:162px;width:28px">
<svg class="ic" style="left:5px;top:5px" width="16" height="16" viewBox="0 0 24 24"><path fill="#d32f2f" d="M12 2C6.47 2 2 6.47 2 12s4.47 10 10 10 10-4.47 10-10S17.53 2 12 2zm5 13.59L15.59 17 12 13.41 8.41 17 7 15.59 10.59 12 7 8.41 8.41 7 12 10.59 15.59 7 17 8.41 13.41 12 17 15.59z"/></svg>
</div>
<div class="btn tog" style="left:717px;top:162px;width:28px">
<svg class="ic" style="left:5px;top:5px" width="16" height="16" viewBox="0 0 24 24"><path fill="#43a047" d="M12.65 10C11.83 7.67 9.61 6 7 6c-3.31 0-6 2.69-6 6s2.69 6 6 6c2.61 0 4.83-1.67 5.65-4H17v4h4v-4h2v-4H12.65zM7 14c-1.1 0-2-.9-2-2s.9-2 2-2 2 .9 2 2-.9 2-2 2z"/></svg>
</div>
<div class="btn tog" style="left:749px;top:162px;width:28px">
<svg class="ic" style="left:5px;top:5px" width="16" height="16" viewBox="0 0 24 24"><path fill="#f4511e" d="M18 8h-1V6c0-2.76-2.24-5-5-5S7 3.24 7 6v2H6c-1.1 0-2 .9-2 2v10c0 1.1.9 2 2 2h12c1.1 0 2-.9 2-2V10c0-1.1-.9-2-2-2zm-6 9c-1.1 0-2-.9-2-2s.9-2 2-2 2 .9 2 2-.9 2-2 2zm3.1-9H8.9V6c0-1.71 1.39-3.1 3.1-3.1 1.71 0 3.1 1.39 3.1 3.1v2z"/></svg>
</div>
<div class="t" style="left:796px;top:169px;">Filter</div>
<div class="a" style="left:831px;top:162px;width:349px;height:28px;background:#fff;border:1px solid #cfcfcf;border-radius:2px"></div>
<div class="t" style="left:840px;top:169px;">(None)</div>
<svg class="ic" style="left:1156px;top:165px" width="22" height="22" viewBox="0 0 24 24"><path fill="#222" d="M7.41 8.59L12 13.17l4.59-4.58L18 10l-6 6-6-6 1.41-1.41z"/></svg>
<div class="btn" style="left:1185px;top:162px"><svg class="ic" style="left:1px;top:1px" width="24" height="24" viewBox="0 0 24 24"><path fill="#333" d="M12 12v7.880c.04.3-.06.62-.29.830-.39.390-1.020.390-1.410 0L8.290 18.700a.989.989 0 0 1-.29-.830V12h-.03L2.210 4.620a1 1 0 0 1 .17-1.400C2.570 3.080 2.780 3 3 3h14c.22 0 .43.080.62.220a1 1 0 0 1 .17 1.400L12.030 12H12z"/><path d="M15 18h8M19 14v8" stroke="#333" stroke-width="1.600"/></svg></div>
<div class="btn dis" style="left:1217px;top:162px;width:28px">
<svg class="ic" style="left:1px;top:1px" width="24" height="24" viewBox="0 0 24 24"><path fill="#bdbdbd" d="M3 17.25V21h3.75L17.81 9.94l-3.75-3.75L3 17.25zM20.71 7.04c.39-.39.39-1.02 0-1.41l-2.34-2.34c-.39-.39-1.02-.39-1.41 0l-1.83 1.83 3.75 3.75 1.83-1.83z"/></svg>
</div>
<div class="btn dis" style="left:1249px;top:162px"><svg class="ic" style="left:1px;top:1px" width="24" height="24" viewBox="0 0 24 24"><path fill="none" stroke="#bdbdbd" stroke-width="1.500" d="M11.500 12v7l-3-2v-5L3 4.200h14.500L11.500 12z"/><path d="M15.500 15.500l6 6M21.500 15.500l-6 6" stroke="#bdbdbd" stroke-width="1.600"/></svg></div>
<div class="t" style="left:365px;top:205px;">Find</div>
<div class="a" style="left:401px;top:198px;width:400px;height:28px;background:#fff;border:1px solid #cfcfcf;border-radius:2px"></div>
<div class="btn " style="left:807px;top:198px;width:28px">
<div class="t" style="left:3px;top:4px;font-size:16.500px;line-height:20px;height:20px;color:#444">Aa</div>
</div>
<div class="btn " style="left:839px;top:198px;width:28px">
<svg class="ic" style="left:1px;top:1px" width="24" height="24" viewBox="0 0 24 24"><circle cx="6.900" cy="18.900" r="2" fill="#444"/><path d="M15.300 5v11.800M9.400 10.900h11.800M11.100 6.700l8.400 8.400M19.500 6.700l-8.400 8.400" stroke="#444" stroke-width="1.800" fill="none"/></svg>
</div>
<div class="btn " style="left:871px;top:198px;width:28px">
<svg class="ic" style="left:1px;top:1px" width="24" height="24" viewBox="0 0 24 24"><path fill="#424242" d="M12 4l-1.41 1.41L16.17 11H4v2h12.17l-5.58 5.59L12 20l8-8z"/></svg>
</div>
<div class="btn " style="left:903px;top:198px;width:28px">
<svg class="ic" style="left:1px;top:1px" width="24" height="24" viewBox="0 0 24 24"><path fill="#424242" d="M20 11H7.83l5.59-5.59L12 4l-8 8 8 8 1.41-1.41L7.83 13H20v-2z"/></svg>
</div>
<div class="btn " style="left:935px;top:198px;width:28px">
<svg class="ic" style="left:1px;top:1px" width="24" height="24" viewBox="0 0 24 24"><path fill="#424242" d="M15.5 14h-.79l-.28-.27C15.41 12.59 16 11.11 16 9.5 16 5.91 13.09 3 9.5 3S3 5.91 3 9.5 5.91 16 9.5 16c1.61 0 3.09-.59 4.23-1.57l.27.28v.79l5 4.99L20.49 19l-4.99-5zm-6 0C7.01 14 5 11.99 5 9.5S7.01 5 9.5 5 14 7.01 14 9.5 11.99 14 9.5 14z"/></svg>
</div>
<div class="btn dis" style="left:358px;top:234px;width:28px">
<svg class="ic" style="left:1px;top:1px" width="24" height="24" viewBox="0 0 24 24"><path fill="#bdbdbd" d="M18.41 16.59L13.82 12l4.59-4.59L17 6l-6 6 6 6zM6 6h2v12H6z"/></svg>
</div>
<div class="btn dis" style="left:390px;top:234px;width:28px">
<svg class="ic" style="left:1px;top:1px" width="24" height="24" viewBox="0 0 24 24"><path fill="#bdbdbd" d="M15.41 7.41L14 6l-6 6 6 6 1.41-1.41L10.83 12z"/></svg>
</div>
<div class="btn" style="left:422px;top:234px;width:47px;background:#fff;border-color:#b5b5b5;border-radius:3px"><div class="t" style="left:8px;top:6px">7</div><svg class="ic" width="22" height="22" viewBox="0 0 24 24" style="left:22px;top:2.500px"><path fill="#111" d="M7.41 8.59L12 13.17l4.59-4.58L18 10l-6 6-6-6 1.41-1.41z"/></svg></div>
<div class="btn " style="left:473px;top:234px;width:28px">
<svg class="ic" style="left:1px;top:1px" width="24" height="24" viewBox="0 0 24 24"><path fill="#424242" d="M10 6L8.59 7.41 13.17 12l-4.58 4.59L10 18l6-6z"/></svg>
</div>
<div class="btn " style="left:505px;top:234px;width:28px">
<svg class="ic" style="left:1px;top:1px" width="24" height="24" viewBox="0 0 24 24"><path fill="#424242" d="M5.59 7.41L10.18 12l-4.59 4.59L7 18l6-6-6-6zM16 6h2v12h-2z"/></svg>
</div>
<div class="btn " style="left:537px;top:234px;width:28px">
<svg class="ic" style="left:1px;top:1px" width="24" height="24" viewBox="0 0 24 24"><path fill="#424242" d="M17 12h-5v5h5v-5zM16 1v2H8V1H6v2H5c-1.11 0-1.99.9-1.99 2L3 19c0 1.1.89 2 2 2h14c1.1 0 2-.9 2-2V5c0-1.1-.9-2-2-2h-1V1h-2zm3 18H5V8h14v11z"/></svg>
</div>
<div class="btn tog" style="left:569px;top:234px;width:28px">
<svg class="ic" style="left:1px;top:1px" width="24" height="24" viewBox="0 0 24 24"><path fill="#641818" d="M19 1l-5 5v11l5-4.5V1zM1 6v14.65c0 .25.25.5.5.5.1 0 .15-.05.25-.05C3.1 20.45 5.05 20 6.5 20c1.95 0 4.05.4 5.5 1.5 1.35-.85 3.8-1.5 5.5-1.5 1.65 0 3.35.3 4.75 1.05.1.05.15.05.25.05.25 0 .5-.25.5-.5V6c-.6-.45-1.25-.75-2-1v13.5c-1.1-.35-2.3-.5-3.5-.5-1.7 0-4.15.65-5.5 1.5V8 6c-1.45-1.1-3.55-1.5-5.5-1.5S2.45 4.9 1 6zm10 13c-1.4-.7-3-1-4.5-1-1.2 0-2.4.15-3.5.5V7c1.1-.35 2.3-.5 3.5-.5 1.5 0 3.1.35 4.500 1.050V19z"/></svg>
</div>
<div class="btn tog" style="left:601px;top:234px;width:28px">
<svg class="ic" style="left:1px;top:1px" width="24" height="24" viewBox="0 0 24 24"><path fill="#641818" d="M20 5H4c-1.1 0-1.99.9-1.99 2L2 17c0 1.1.9 2 2 2h16c1.1 0 2-.9 2-2V7c0-1.1-.9-2-2-2zm-9 3h2v2h-2V8zm0 3h2v2h-2v-2zM8 8h2v2H8V8zm0 3h2v2H8v-2zm-1 2H5v-2h2v2zm0-3H5V8h2v2zm9 7H8v-2h8v2zm0-4h-2v-2h2v2zm0-3h-2V8h2v2zm3 3h-2v-2h2v2zm0-3h-2V8h2v2z"/></svg>
</div>
<div class="t" style="left:644px;top:241px;letter-spacing:-0.230px">Page: 1 of 8</div>
<div class="t" style="left:719px;top:241px;">Date Range: 1/3/2024 - 12/28/2023</div>
<div class="t" style="left:921px;top:241px;letter-spacing:-0.120px">Displaying: 113</div>
<div class="t" style="left:1014px;top:241px;letter-spacing:-0.180px">Filtered: 0</div>
<div class="t" style="left:1079px;top:241px;letter-spacing:-0.200px">Duration: 00:00:03.881</div>
<div class="a" style="left:352px;top:268px;width:1218px;height:29px;background:#fafafa;border:1px solid #8c8c8c"></div>
<div class="t" style="left:358px;top:276px;">Timeline</div>
<div class="a" style="left:408px;top:269px;width:1px;height:27px;background:#8c8c8c"></div>
<div class="a" style="left:574px;top:269px;width:1px;height:27px;background:#8c8c8c"></div>
<div class="a" style="left:740px;top:269px;width:1px;height:27px;background:#8c8c8c"></div>
<div class="a" style="left:906px;top:269px;width:1px;height:27px;background:#8c8c8c"></div>
<div class="a" style="left:1072px;top:269px;width:1px;height:27px;background:#8c8c8c"></div>
<div class="a" style="left:1238px;top:269px;width:1px;height:27px;background:#8c8c8c"></div>
<div class="a" style="left:1404px;top:269px;width:1px;height:27px;background:#8c8c8c"></div>
<div class="a" style="left:534px;top:274px;width:3px;height:17px;background:#777;border:1px solid #111"></div>
<div class="a" style="left:591px;top:274px;width:3px;height:17px;background:#777;border:1px solid #111"></div>
<div class="a" style="left:598px;top:274px;width:3px;height:17px;background:#777;border:1px solid #111"></div>
<div class="a" style="left:625px;top:274px;width:3px;height:17px;background:#777;border:1px solid #111"></div>
<div class="a" style="left:635px;top:274px;width:3px;height:17px;background:#777;border:1px solid #111"></div>
<div class="a" style="left:672px;top:274px;width:4px;height:17px;background:#0a0a0a;border:1px solid #111"></div>
<div class="a" style="left:675px;top:274px;width:3px;height:17px;background:#777;border:1px solid #111"></div>
<div class="a" style="left:686px;top:274px;width:3px;height:17px;background:#777;border:1px solid #111"></div>
<div class="a" style="left:788px;top:274px;width:3px;height:17px;background:#777;border:1px solid #111"></div>
<div class="a" style="left:872px;top:274px;width:3px;height:17px;background:#777;border:1px solid #111"></div>
<div class="a" style="left:902px;top:274px;width:3px;height:17px;background:#777;border:1px solid #111"></div>
<div class="a" style="left:949px;top:274px;width:3px;height:17px;background:#0a0a0a;border:1px solid #111"></div>
<div class="a" style="left:969px;top:274px;width:3px;height:17px;background:#777;border:1px solid #111"></div>
<div class="a" style="left:999px;top:274px;width:3px;height:17px;background:#777;border:1px solid #111"></div>
<div class="a" style="left:1003px;top:274px;width:3px;height:17px;background:#777;border:1px solid #111"></div>
<div class="a" style="left:1013px;top:274px;width:3px;height:17px;background:#777;border:1px solid #111"></div>
<div class="a" style="left:1135px;top:274px;width:3px;height:17px;background:#777;border:1px solid #111"></div>
<div class="a" style="left:1353px;top:274px;width:3px;height:17px;background:#777;border:1px solid #111"></div>
<div class="a" style="left:1362px;top:274px;width:3px;height:17px;background:#777;border:1px solid #111"></div>
<div class="a" style="left:1399px;top:274px;width:3px;height:17px;background:#777;border:1px solid #111"></div>
<div class="a" style="left:1412px;top:274px;width:3px;height:17px;background:#0a0a0a;border:1px solid #111"></div>
<div class="a" style="left:1448px;top:274px;width:3px;height:17px;background:#777;border:1px solid #111"></div>
<div class="a" style="left:1457px;top:274px;width:3px;height:17px;background:#777;border:1px solid #111"></div>
<div class="a" style="left:1477px;top:274px;width:3px;height:17px;background:#0a0a0a;border:1px solid #111"></div>
<div class="a" style="left:1482px;top:274px;width:29px;height:17px;background:#0a0a0a;border:1px solid #111"></div>
<div class="a" style="left:1519px;top:274px;width:4px;height:17px;background:#0a0a0a;border:1px solid #111"></div>
<div class="a" style="left:1112px;top:272px;width:7px;height:21px;background:#808080;border:1px solid #111"></div>
<div class="a" style="left:1483px;top:275px;width:1px;height:15px;background:#555"></div>
<div class="a" style="left:1497px;top:275px;width:1px;height:15px;background:#666"></div>
<div class="a" style="left:352px;top:299px;width:1218px;height:816px;background:#eeeff1"></div>
<div class="a" style="left:352px;top:299px;width:1192px;height:790px;background:#fff;border:1px solid #8c8c8c;overflow:hidden">
<div class="a" style="left:0;top:0;width:1190px;height:48px;background:#eeeff1;border-bottom:1px solid #9a9a9a"></div>
<div class="t" style="left:16px;top:17px">Drag the column header here to group the rows by the column</div>
<div class="btn dis" style="left:1112px;top:10px;background:#f1f1f2"><svg class="ic" style="left:2px;top:2px" width="22" height="22" viewBox="0 0 24 24"><path fill="#b0b0b0" d="M7.41,18.41L6,17L12,11L18,17L16.59,18.41L12,13.83L7.41,18.41M7.41,12.41L6,11L12,5L18,11L16.59,12.41L12,7.83L7.41,12.41Z"/></svg></div>
<div class="btn dis" style="left:1144px;top:10px;background:#f1f1f2"><svg class="ic" style="left:2px;top:2px" width="22" height="22" viewBox="0 0 24 24"><path fill="#b0b0b0" d="M16.59,5.59L18,7L12,13L6,7L7.41,5.59L12,10.17L16.59,5.59M16.59,11.59L18,13L12,19L6,13L7.41,11.59L12,16.17L16.59,11.59Z"/></svg></div>
<div class="a" style="left:0;top:48px;width:1173px;height:28px;background:#f5f5f5;border-bottom:2px solid #dedede">
<div class="hd" style="left:0px;width:60px"><span>Count</span></div>
<div class="hd" style="left:60px;width:35px"><span></span></div>
<div class="hd" style="left:96px;width:89px"><span>Level</span></div>
<div class="hd" style="left:185px;width:162px"><span>Time</span></div>
<div class="hd" style="left:347px;width:53px"><span>Host</span></div>
<div class="hd" style="left:400px;width:76px"><span>Log</span></div>
<div class="hd" style="left:476px;width:231px"><span>Source</span></div>
<div class="hd" style="left:707px;width:56px"><span>Event</span></div>
<div class="hd" style="left:764px;width:160px"><span>Category</span></div>
<div class="hd" style="left:924px;width:36px"><span></span></div>
<div class="hd" style="left:960px;width:213px"><span>Description</span></div>
<svg class="ic" style="left:43px;top:10px" width="9" height="8" viewBox="0 0 9 8"><path d="M0.500 1h8L4.500 7z" fill="#111"/></svg>
<svg class="ic" width="16" height="16" viewBox="0 0 24 24" style="left:66.500px;top:6px"><path fill="#222" d="M11 7h2v2h-2zm0 4h2v6h-2zm1-9C6.48 2 2 6.48 2 12s4.48 10 10 10 10-4.48 10-10S17.52 2 12 2zm0 18c-4.41 0-8-3.59-8-8s3.59-8 8-8 8 3.59 8 8-3.59 8-8 8z"/></svg>
<svg class="ic" style="left:523px;top:9px" width="9" height="8" viewBox="0 0 9 8"><path d="M0.500 7h8L4.500 1z" fill="#111"/></svg>
<svg class="ic" style="left:747px;top:9px" width="9" height="8" viewBox="0 0 9 8"><path d="M0.500 7h8L4.500 1z" fill="#111"/></svg>
<svg class="ic" width="15" height="15" viewBox="0 0 24 24" style="left:930px;top:6px"><path fill="#222" d="M14 6l-1-2H5v17h2v-7h5l1 2h7V6h-6zm4 8h-4l-1-2H7V6h5l1 2h5v6z"/></svg>
</div>
<div class="a" style="left:0;top:76px;width:1173px;height:696px;overflow:hidden">
<div class="row" style="top:0px;">
<div class="c r" style="left:0px;width:53px;top:6px;letter-spacing:-0.250px">43,474</div>
<svg class="ic" style="left:69px;top:3.2px" width="20" height="20" viewBox="0 0 24 24"><path fill="#2e9b3a" d="M12.65 10C11.83 7.67 9.61 6 7 6c-3.31 0-6 2.69-6 6s2.69 6 6 6c2.61 0 4.83-1.67 5.65-4H17v4h4v-4h2v-4H12.65zM7 14c-1.1 0-2-.9-2-2s.9-2 2-2 2 .9 2 2-.9 2-2 2z"/></svg>
<div class="c" style="left:105px;top:6px;letter-spacing:-0.220px">Success Audit</div>
<div class="c r" style="left:190px;width:150px;top:6px;letter-spacing:-0.160px">1/3/2024 3:06:04.807 PM</div>
<div class="c" style="left:356px;top:6px">Hoyt</div>
<div class="c" style="left:409px;top:6px;letter-spacing:-0.200px">Security</div>
<div class="c" style="left:485px;top:6px;width:222px;letter-spacing:0.14px">Microsoft-Windows-Security-Auditing</div>
<div class="c r" style="left:710px;width:47px;top:6px;letter-spacing:-0.150px">4656</div>
<div class="c" style="left:773px;top:6px;letter-spacing:-0.41px">File System</div>
<div class="c" style="left:969px;top:6px;width:204px;letter-spacing:0px">A handle to an object was requested.</div>
</div>
<div class="row" style="top:26px;">
<div class="c r" style="left:0px;width:53px;top:6px;letter-spacing:-0.250px">43,470</div>
<svg class="ic" style="left:69px;top:3.2px" width="20" height="20" viewBox="0 0 24 24"><path fill="#2e9b3a" d="M12.65 10C11.83 7.67 9.61 6 7 6c-3.31 0-6 2.69-6 6s2.69 6 6 6c2.61 0 4.83-1.67 5.65-4H17v4h4v-4h2v-4H12.65zM7 14c-1.1 0-2-.9-2-2s.9-2 2-2 2 .9 2 2-.9 2-2 2z"/></svg>
<div class="c" style="left:105px;top:6px;letter-spacing:-0.220px">Success Audit</div>
<div class="c r" style="left:190px;width:150px;top:6px;letter-spacing:-0.160px">1/3/2024 3:06:04.807 PM</div>
<div class="c" style="left:356px;top:6px">Hoyt</div>
<div class="c" style="left:409px;top:6px;letter-spacing:-0.200px">Security</div>
<div class="c" style="left:485px;top:6px;width:222px;letter-spacing:0.14px">Microsoft-Windows-Security-Auditing</div>
<div class="c r" style="left:710px;width:47px;top:6px;letter-spacing:-0.150px">4690</div>
<div class="c" style="left:773px;top:6px;letter-spacing:0.085px">Handle Manipulation</div>
<div class="c" style="left:969px;top:6px;width:204px;letter-spacing:0px">An attempt was made to duplicate a handle to an object.</div>
</div>
<div class="row" style="top:52px;">
<div class="c r" style="left:0px;width:53px;top:6px;letter-spacing:-0.250px">15,277</div>
<svg class="ic" style="left:69px;top:3.2px" width="20" height="20" viewBox="0 0 24 24"><path fill="#2e9b3a" d="M12.65 10C11.83 7.67 9.61 6 7 6c-3.31 0-6 2.69-6 6s2.69 6 6 6c2.61 0 4.83-1.67 5.65-4H17v4h4v-4h2v-4H12.65zM7 14c-1.1 0-2-.9-2-2s.9-2 2-2 2 .9 2 2-.9 2-2 2z"/></svg>
<div class="c" style="left:105px;top:6px;letter-spacing:-0.220px">Success Audit</div>
<div class="c r" style="left:190px;width:150px;top:6px;letter-spacing:-0.160px">1/3/2024 3:10:05.613 PM</div>
<div class="c" style="left:356px;top:6px">Hoyt</div>
<div class="c" style="left:409px;top:6px;letter-spacing:-0.200px">Security</div>
<div class="c" style="left:485px;top:6px;width:222px;letter-spacing:0.14px">Microsoft-Windows-Security-Auditing</div>
<div class="c r" style="left:710px;width:47px;top:6px;letter-spacing:-0.150px">5379</div>
<div class="c" style="left:773px;top:6px;letter-spacing:0px">User Account Management</div>
<div class="c" style="left:969px;top:6px;width:204px;letter-spacing:0px">Credential Manager credentials were read.</div>
</div>
<div class="row" style="top:78px;">
<div class="c r" style="left:0px;width:53px;top:6px;letter-spacing:-0.250px">8,887</div>
<svg class="ic" style="left:69px;top:3.2px" width="20" height="20" viewBox="0 0 24 24"><path fill="#fbc02d" d="M1 21h22L12 2 1 21zm12-3h-2v-2h2v2zm0-4h-2v-4h2v4z"/></svg>
<div class="c" style="left:105px;top:6px;letter-spacing:-0.220px">Notice</div>
<div class="c r" style="left:190px;width:150px;top:6px;letter-spacing:-0.160px">1/3/2024 3:09:02.353 PM</div>
<div class="c" style="left:356px;top:6px">Hoyt</div>
<div class="c" style="left:409px;top:6px;letter-spacing:-0.400px">System</div>
<div class="c" style="left:485px;top:6px;width:222px;letter-spacing:0.11px">Microsoft-Windows-DistributedCOM</div>
<div class="c r" style="left:710px;width:47px;top:6px;letter-spacing:-0.150px">10016</div>
<div class="c" style="left:773px;top:6px;letter-spacing:0px"></div>
<div class="c" style="left:969px;top:6px;width:204px;letter-spacing:0px">The machine-default permission settings do not grant Local Activation</div>
</div>
<div class="row" style="top:104px;background:#f0f0f0;border-top:1px solid #cc4b4b;border-bottom:1px solid #cc4b4b;border-left:1px solid #cc4b4b;">
<div class="c r" style="left:-1px;width:53px;top:5px;letter-spacing:-0.250px">2,781</div>
<svg class="ic" style="left:68.5px;top:2.7px" width="19" height="19" viewBox="0 0 24 24"><path fill="#d32f2f" d="M12 2C6.47 2 2 6.47 2 12s4.47 10 10 10 10-4.47 10-10S17.53 2 12 2zm5 13.59L15.59 17 12 13.41 8.41 17 7 15.59 10.59 12 7 8.41 8.41 7 12 10.59 15.59 7 17 8.41 13.41 12 17 15.59z"/></svg>
<div class="c" style="left:104px;top:5px;letter-spacing:-0.220px">Error</div>
<div class="c r" style="left:189px;width:150px;top:5px;letter-spacing:-0.160px">1/1/2024 9:05:59.407 AM</div>
<div class="c" style="left:355px;top:5px">Hoyt</div>
<div class="c" style="left:408px;top:5px;letter-spacing:-0.400px">System</div>
<div class="c" style="left:484px;top:5px;width:222px;letter-spacing:0px">WudfUsbccidDriver</div>
<div class="c r" style="left:709px;width:47px;top:5px;letter-spacing:-0.150px">7</div>
<div class="c" style="left:772px;top:5px;letter-spacing:0px">Driver</div>
<svg class="ic" style="left:932px;top:3px" width="20" height="20" viewBox="0 0 24 24"><path fill="#d32f2f" d="M14.4 6L14 4H5v17h2v-7h5.6l.4 2h7V6z"/></svg>
<div class="c" style="left:968px;top:5px;width:204px;letter-spacing:0px">Device responded with an error status.</div>
</div>
<div class="row" style="top:130px;">
<div class="c r" style="left:0px;width:53px;top:6px;letter-spacing:-0.250px">2,023</div>
<svg class="ic" style="left:69px;top:3.2px" width="20" height="20" viewBox="0 0 24 24"><path fill="#2e9b3a" d="M12.65 10C11.83 7.67 9.61 6 7 6c-3.31 0-6 2.69-6 6s2.69 6 6 6c2.61 0 4.83-1.67 5.65-4H17v4h4v-4h2v-4H12.65zM7 14c-1.1 0-2-.9-2-2s.9-2 2-2 2 .9 2 2-.9 2-2 2z"/></svg>
<div class="c" style="left:105px;top:6px;letter-spacing:-0.220px">Success Audit</div>
<div class="c r" style="left:190px;width:150px;top:6px;letter-spacing:-0.160px">1/3/2024 3:08:05.853 PM</div>
<div class="c" style="left:356px;top:6px">Hoyt</div>
<div class="c" style="left:409px;top:6px;letter-spacing:-0.200px">Security</div>
<div class="c" style="left:485px;top:6px;width:222px;letter-spacing:0.14px">Microsoft-Windows-Security-Auditing</div>
<div class="c r" style="left:710px;width:47px;top:6px;letter-spacing:-0.150px">4624</div>
<div class="c" style="left:773px;top:6px;letter-spacing:0px">Logon</div>
<div class="c" style="left:969px;top:6px;width:204px;letter-spacing:0px">An account was successfully logged on.</div>
</div>
<div class="row" style="top:156px;">
<div class="c r" style="left:0px;width:53px;top:6px;letter-spacing:-0.250px">2,023</div>
<svg class="ic" style="left:69px;top:3.2px" width="20" height="20" viewBox="0 0 24 24"><path fill="#2e9b3a" d="M12.65 10C11.83 7.67 9.61 6 7 6c-3.31 0-6 2.69-6 6s2.69 6 6 6c2.61 0 4.83-1.67 5.65-4H17v4h4v-4h2v-4H12.65zM7 14c-1.1 0-2-.9-2-2s.9-2 2-2 2 .9 2 2-.9 2-2 2z"/></svg>
<div class="c" style="left:105px;top:6px;letter-spacing:-0.220px">Success Audit</div>
<div class="c r" style="left:190px;width:150px;top:6px;letter-spacing:-0.160px">1/3/2024 3:08:05.853 PM</div>
<div class="c" style="left:356px;top:6px">Hoyt</div>
<div class="c" style="left:409px;top:6px;letter-spacing:-0.200px">Security</div>
<div class="c" style="left:485px;top:6px;width:222px;letter-spacing:0.14px">Microsoft-Windows-Security-Auditing</div>
<div class="c r" style="left:710px;width:47px;top:6px;letter-spacing:-0.150px">4627</div>
<div class="c" style="left:773px;top:6px;letter-spacing:0px">Group Membership</div>
<div class="c" style="left:969px;top:6px;width:204px;letter-spacing:0px">Group membership information.</div>
</div>
<div class="row" style="top:182px;">
<div class="c r" style="left:0px;width:53px;top:6px;letter-spacing:-0.250px">2,019</div>
<svg class="ic" style="left:69px;top:3.2px" width="20" height="20" viewBox="0 0 24 24"><path fill="#2e9b3a" d="M12.65 10C11.83 7.67 9.61 6 7 6c-3.31 0-6 2.69-6 6s2.69 6 6 6c2.61 0 4.83-1.67 5.65-4H17v4h4v-4h2v-4H12.65zM7 14c-1.1 0-2-.9-2-2s.9-2 2-2 2 .9 2 2-.9 2-2 2z"/></svg>
<div class="c" style="left:105px;top:6px;letter-spacing:-0.220px">Success Audit</div>
<div class="c r" style="left:190px;width:150px;top:6px;letter-spacing:-0.160px">1/3/2024 3:08:05.853 PM</div>
<div class="c" style="left:356px;top:6px">Hoyt</div>
<div class="c" style="left:409px;top:6px;letter-spacing:-0.200px">Security</div>
<div class="c" style="left:485px;top:6px;width:222px;letter-spacing:0.14px">Microsoft-Windows-Security-Auditing</div>
<div class="c r" style="left:710px;width:47px;top:6px;letter-spacing:-0.150px">4672</div>
<div class="c" style="left:773px;top:6px;letter-spacing:-0.2px">Special Logon</div>
<div class="c" style="left:969px;top:6px;width:204px;letter-spacing:0px">Special privileges assigned to new logon.</div>
</div>
<div class="row" style="top:208px;">
<div class="c r" style="left:0px;width:53px;top:6px;letter-spacing:-0.250px">1,569</div>
<svg class="ic" style="left:69px;top:3.2px" width="20" height="20" viewBox="0 0 24 24"><path fill="#2e9b3a" d="M12.65 10C11.83 7.67 9.61 6 7 6c-3.31 0-6 2.69-6 6s2.69 6 6 6c2.61 0 4.83-1.67 5.65-4H17v4h4v-4h2v-4H12.65zM7 14c-1.1 0-2-.9-2-2s.9-2 2-2 2 .9 2 2-.9 2-2 2z"/></svg>
<div class="c" style="left:105px;top:6px;letter-spacing:-0.220px">Success Audit</div>
<div class="c r" style="left:190px;width:150px;top:6px;letter-spacing:-0.160px">1/3/2024 2:57:07.850 PM</div>
<div class="c" style="left:356px;top:6px">Hoyt</div>
<div class="c" style="left:409px;top:6px;letter-spacing:-0.200px">Security</div>
<div class="c" style="left:485px;top:6px;width:222px;letter-spacing:0.14px">Microsoft-Windows-Security-Auditing</div>
<div class="c r" style="left:710px;width:47px;top:6px;letter-spacing:-0.150px">4634</div>
<div class="c" style="left:773px;top:6px;letter-spacing:0px">Logoff</div>
<div class="c" style="left:969px;top:6px;width:204px;letter-spacing:0px">An account was logged off.</div>
</div>
<div class="row" style="top:234px;">
<div class="c r" style="left:0px;width:53px;top:6px;letter-spacing:-0.250px">1,319</div>
<svg class="ic" style="left:69px;top:3.2px" width="20" height="20" viewBox="0 0 24 24"><path fill="#2e9b3a" d="M12.65 10C11.83 7.67 9.61 6 7 6c-3.31 0-6 2.69-6 6s2.69 6 6 6c2.61 0 4.83-1.67 5.65-4H17v4h4v-4h2v-4H12.65zM7 14c-1.1 0-2-.9-2-2s.9-2 2-2 2 .9 2 2-.9 2-2 2z"/></svg>
<div class="c" style="left:105px;top:6px;letter-spacing:-0.220px">Success Audit</div>
<div class="c r" style="left:190px;width:150px;top:6px;letter-spacing:-0.160px">1/3/2024 2:39:31.280 PM</div>
<div class="c" style="left:356px;top:6px">Hoyt</div>
<div class="c" style="left:409px;top:6px;letter-spacing:-0.200px">Security</div>
<div class="c" style="left:485px;top:6px;width:222px;letter-spacing:0.14px">Microsoft-Windows-Security-Auditing</div>
<div class="c r" style="left:710px;width:47px;top:6px;letter-spacing:-0.150px">4798</div>
<div class="c" style="left:773px;top:6px;letter-spacing:0px">User Account Management</div>
<div class="c" style="left:969px;top:6px;width:204px;letter-spacing:0px">A user&#x27;s local group membership was enumerated.</div>
</div>
<div class="row" style="top:260px;">
<div class="c r" style="left:0px;width:53px;top:6px;letter-spacing:-0.250px">581</div>
<svg class="ic" style="left:69px;top:3.2px" width="20" height="20" viewBox="0 0 24 24"><path fill="#2e9b3a" d="M12.65 10C11.83 7.67 9.61 6 7 6c-3.31 0-6 2.69-6 6s2.69 6 6 6c2.61 0 4.83-1.67 5.65-4H17v4h4v-4h2v-4H12.65zM7 14c-1.1 0-2-.9-2-2s.9-2 2-2 2 .9 2 2-.9 2-2 2z"/></svg>
<div class="c" style="left:105px;top:6px;letter-spacing:-0.220px">Success Audit</div>
<div class="c r" style="left:190px;width:150px;top:6px;letter-spacing:-0.160px">1/3/2024 1:43:19.173 PM</div>
<div class="c" style="left:356px;top:6px">Hoyt</div>
<div class="c" style="left:409px;top:6px;letter-spacing:-0.200px">Security</div>
<div class="c" style="left:485px;top:6px;width:222px;letter-spacing:0.14px">Microsoft-Windows-Security-Auditing</div>
<div class="c r" style="left:710px;width:47px;top:6px;letter-spacing:-0.150px">4664</div>
<div class="c" style="left:773px;top:6px;letter-spacing:-0.41px">File System</div>
<div class="c" style="left:969px;top:6px;width:204px;letter-spacing:0px">An attempt was made to create a hard link.</div>
</div>
<div class="row" style="top:286px;">
<div class="c r" style="left:0px;width:53px;top:6px;letter-spacing:-0.250px">210</div>
<svg class="ic" style="left:69px;top:3.2px" width="20" height="20" viewBox="0 0 24 24"><path fill="#2e9b3a" d="M12.65 10C11.83 7.67 9.61 6 7 6c-3.31 0-6 2.69-6 6s2.69 6 6 6c2.61 0 4.83-1.67 5.65-4H17v4h4v-4h2v-4H12.65zM7 14c-1.1 0-2-.9-2-2s.9-2 2-2 2 .9 2 2-.9 2-2 2z"/></svg>
<div class="c" style="left:105px;top:6px;letter-spacing:-0.220px">Success Audit</div>
<div class="c r" style="left:190px;width:150px;top:6px;letter-spacing:-0.160px">1/3/2024 2:56:30.120 PM</div>
<div class="c" style="left:356px;top:6px">Hoyt</div>
<div class="c" style="left:409px;top:6px;letter-spacing:-0.200px">Security</div>
<div class="c" style="left:485px;top:6px;width:222px;letter-spacing:0.14px">Microsoft-Windows-Security-Auditing</div>
<div class="c r" style="left:710px;width:47px;top:6px;letter-spacing:-0.150px">4648</div>
<div class="c" style="left:773px;top:6px;letter-spacing:0px">Logon</div>
<div class="c" style="left:969px;top:6px;width:204px;letter-spacing:0.08px">A logon was attempted using explicit credentials.</div>
</div>
<div class="row" style="top:312px;">
<div class="c r" style="left:0px;width:53px;top:6px;letter-spacing:-0.250px">200</div>
<svg class="ic" style="left:69px;top:3.2px" width="20" height="20" viewBox="0 0 24 24"><path fill="#fbc02d" d="M1 21h22L12 2 1 21zm12-3h-2v-2h2v2zm0-4h-2v-4h2v4z"/></svg>
<div class="c" style="left:105px;top:6px;letter-spacing:-0.220px">Notice</div>
<div class="c r" style="left:190px;width:150px;top:6px;letter-spacing:-0.160px">1/3/2024 2:34:59.357 PM</div>
<div class="c" style="left:356px;top:6px">Hoyt</div>
<div class="c" style="left:409px;top:6px;letter-spacing:0.100px">Application</div>
<div class="c" style="left:485px;top:6px;width:222px;letter-spacing:-0.064px">Microsoft-Windows-User Profiles Service</div>
<div class="c r" style="left:710px;width:47px;top:6px;letter-spacing:-0.150px">1534</div>
<div class="c" style="left:773px;top:6px;letter-spacing:0px"></div>
<div class="c" style="left:969px;top:6px;width:204px;letter-spacing:0px">Profile notification of event Load for component</div>
</div>
<div class="row" style="top:338px;">
<div class="c r" style="left:0px;width:53px;top:6px;letter-spacing:-0.250px">177</div>
<svg class="ic" style="left:69px;top:3.2px" width="20" height="20" viewBox="0 0 24 24"><path fill="#2e9b3a" d="M12.65 10C11.83 7.67 9.61 6 7 6c-3.31 0-6 2.69-6 6s2.69 6 6 6c2.61 0 4.83-1.67 5.65-4H17v4h4v-4h2v-4H12.65zM7 14c-1.1 0-2-.9-2-2s.9-2 2-2 2 .9 2 2-.9 2-2 2z"/></svg>
<div class="c" style="left:105px;top:6px;letter-spacing:-0.220px">Success Audit</div>
<div class="c r" style="left:190px;width:150px;top:6px;letter-spacing:-0.160px">1/3/2024 2:56:30.120 PM</div>
<div class="c" style="left:356px;top:6px">Hoyt</div>
<div class="c" style="left:409px;top:6px;letter-spacing:-0.200px">Security</div>
<div class="c" style="left:485px;top:6px;width:222px;letter-spacing:0.14px">Microsoft-Windows-Security-Auditing</div>
<div class="c r" style="left:710px;width:47px;top:6px;letter-spacing:-0.150px">4738</div>
<div class="c" style="left:773px;top:6px;letter-spacing:0px">User Account Management</div>
<div class="c" style="left:969px;top:6px;width:204px;letter-spacing:0px">A user account was changed.</div>
</div>
<div class="row" style="top:364px;">
<div class="c r" style="left:0px;width:53px;top:6px;letter-spacing:-0.250px">172</div>
<svg class="ic" style="left:69px;top:3.2px" width="20" height="20" viewBox="0 0 24 24"><path fill="#fbc02d" d="M1 21h22L12 2 1 21zm12-3h-2v-2h2v2zm0-4h-2v-4h2v4z"/></svg>
<div class="c" style="left:105px;top:6px;letter-spacing:-0.220px">Notice</div>
<div class="c r" style="left:190px;width:150px;top:6px;letter-spacing:-0.160px">1/3/2024 3:09:35.837 PM</div>
<div class="c" style="left:356px;top:6px">Hoyt</div>
<div class="c" style="left:409px;top:6px;letter-spacing:0.100px">Application</div>
<div class="c" style="left:485px;top:6px;width:222px;letter-spacing:-0.48px">CBS Website</div>
<div class="c r" style="left:710px;width:47px;top:6px;letter-spacing:-0.150px">3</div>
<div class="c" style="left:773px;top:6px;letter-spacing:0px"></div>
<div class="c" style="left:969px;top:6px;width:204px;letter-spacing:0.1px">Category: Microsoft.AspNetCore.HttpsPolicy.HttpsRedirectionMiddleware</div>
</div>
<div class="row" style="top:390px;">
<div class="c r" style="left:0px;width:53px;top:6px;letter-spacing:-0.250px">81</div>
<svg class="ic" style="left:69.5px;top:3.7px" width="19" height="19" viewBox="0 0 24 24"><path fill="#d32f2f" d="M12 2C6.47 2 2 6.47 2 12s4.47 10 10 10 10-4.47 10-10S17.53 2 12 2zm5 13.59L15.59 17 12 13.41 8.41 17 7 15.59 10.59 12 7 8.41 8.41 7 12 10.59 15.59 7 17 8.41 13.41 12 17 15.59z"/></svg>
<div class="c" style="left:105px;top:6px;letter-spacing:-0.220px">Error</div>
<div class="c r" style="left:190px;width:150px;top:6px;letter-spacing:-0.160px">1/3/2024 2:35:14.257 PM</div>
<div class="c" style="left:356px;top:6px">Hoyt</div>
<div class="c" style="left:409px;top:6px;letter-spacing:0.100px">Application</div>
<div class="c" style="left:485px;top:6px;width:222px;letter-spacing:-0.33px">.NET Runtime</div>
<div class="c r" style="left:710px;width:47px;top:6px;letter-spacing:-0.150px">1023</div>
<div class="c" style="left:773px;top:6px;letter-spacing:0px"></div>
<svg class="ic" style="left:933px;top:4px" width="20" height="20" viewBox="0 0 24 24"><path fill="#d32f2f" d="M14.4 6L14 4H5v17h2v-7h5.6l.4 2h7V6z"/></svg>
<div class="c" style="left:969px;top:6px;width:204px;letter-spacing:0px">Description: A .NET application failed.</div>
</div>
<div class="row" style="top:416px;">
<div class="c r" style="left:0px;width:53px;top:6px;letter-spacing:-0.250px">61</div>
<svg class="ic" style="left:69px;top:3.2px" width="20" height="20" viewBox="0 0 24 24"><path fill="#2e9b3a" d="M12.65 10C11.83 7.67 9.61 6 7 6c-3.31 0-6 2.69-6 6s2.69 6 6 6c2.61 0 4.83-1.67 5.65-4H17v4h4v-4h2v-4H12.65zM7 14c-1.1 0-2-.9-2-2s.9-2 2-2 2 .9 2 2-.9 2-2 2z"/></svg>
<div class="c" style="left:105px;top:6px;letter-spacing:-0.220px">Success Audit</div>
<div class="c r" style="left:190px;width:150px;top:6px;letter-spacing:-0.160px">1/3/2024 2:19:38.397 PM</div>
<div class="c" style="left:356px;top:6px">Hoyt</div>
<div class="c" style="left:409px;top:6px;letter-spacing:-0.200px">Security</div>
<div class="c" style="left:485px;top:6px;width:222px;letter-spacing:0.14px">Microsoft-Windows-Security-Auditing</div>
<div class="c r" style="left:710px;width:47px;top:6px;letter-spacing:-0.150px">5382</div>
<div class="c" style="left:773px;top:6px;letter-spacing:0px">User Account Management</div>
<div class="c" style="left:969px;top:6px;width:204px;letter-spacing:0px">Vault credentials were read.</div>
</div>
<div class="row" style="top:442px;">
<div class="c r" style="left:0px;width:53px;top:6px;letter-spacing:-0.250px">38</div>
<svg class="ic" style="left:69px;top:3.2px" width="20" height="20" viewBox="0 0 24 24"><path fill="#2e9b3a" d="M12.65 10C11.83 7.67 9.61 6 7 6c-3.31 0-6 2.69-6 6s2.69 6 6 6c2.61 0 4.83-1.67 5.65-4H17v4h4v-4h2v-4H12.65zM7 14c-1.1 0-2-.9-2-2s.9-2 2-2 2 .9 2 2-.9 2-2 2z"/></svg>
<div class="c" style="left:105px;top:6px;letter-spacing:-0.220px">Success Audit</div>
<div class="c r" style="left:190px;width:150px;top:6px;letter-spacing:-0.160px">1/3/2024 1:43:55.370 PM</div>
<div class="c" style="left:356px;top:6px">Hoyt</div>
<div class="c" style="left:409px;top:6px;letter-spacing:-0.200px">Security</div>
<div class="c" style="left:485px;top:6px;width:222px;letter-spacing:0.14px">Microsoft-Windows-Security-Auditing</div>
<div class="c r" style="left:710px;width:47px;top:6px;letter-spacing:-0.150px">6416</div>
<div class="c" style="left:773px;top:6px;letter-spacing:-0.28px">Plug and Play Events</div>
<div class="c" style="left:969px;top:6px;width:204px;letter-spacing:0px">A new external device was recognized by the system.</div>
</div>
<div class="row" style="top:468px;">
<div class="c r" style="left:0px;width:53px;top:6px;letter-spacing:-0.250px">20</div>
<svg class="ic" style="left:69.5px;top:3.7px" width="19" height="19" viewBox="0 0 24 24"><path fill="#d32f2f" d="M12 2C6.47 2 2 6.47 2 12s4.47 10 10 10 10-4.47 10-10S17.53 2 12 2zm5 13.59L15.59 17 12 13.41 8.41 17 7 15.59 10.59 12 7 8.41 8.41 7 12 10.59 15.59 7 17 8.41 13.41 12 17 15.59z"/></svg>
<div class="c" style="left:105px;top:6px;letter-spacing:-0.220px">Error</div>
<div class="c r" style="left:190px;width:150px;top:6px;letter-spacing:-0.160px">1/3/2024 3:01:06.690 PM</div>
<div class="c" style="left:356px;top:6px">Hoyt</div>
<div class="c" style="left:409px;top:6px;letter-spacing:-0.400px">System</div>
<div class="c" style="left:485px;top:6px;width:222px;letter-spacing:0.11px">Microsoft-Windows-DistributedCOM</div>
<div class="c r" style="left:710px;width:47px;top:6px;letter-spacing:-0.150px">10028</div>
<div class="c" style="left:773px;top:6px;letter-spacing:0px"></div>
<div class="c" style="left:969px;top:6px;width:204px;letter-spacing:0px">DCOM was unable to communicate with the computer</div>
</div>
<div class="row" style="top:494px;">
<div class="c r" style="left:0px;width:53px;top:6px;letter-spacing:-0.250px">18</div>
<svg class="ic" style="left:69.5px;top:3.7px" width="19" height="19" viewBox="0 0 24 24"><path fill="#d32f2f" d="M12 2C6.47 2 2 6.47 2 12s4.47 10 10 10 10-4.47 10-10S17.53 2 12 2zm5 13.59L15.59 17 12 13.41 8.41 17 7 15.59 10.59 12 7 8.41 8.41 7 12 10.59 15.59 7 17 8.41 13.41 12 17 15.59z"/></svg>
<div class="c" style="left:105px;top:6px;letter-spacing:-0.220px">Error</div>
<div class="c r" style="left:190px;width:150px;top:6px;letter-spacing:-0.160px">1/3/2024 11:19:43.443 AM</div>
<div class="c" style="left:356px;top:6px">Hoyt</div>
<div class="c" style="left:409px;top:6px;letter-spacing:0.100px">Application</div>
<div class="c" style="left:485px;top:6px;width:222px;letter-spacing:-0.48px">CBS Website</div>
<div class="c r" style="left:710px;width:47px;top:6px;letter-spacing:-0.150px">60404</div>
<div class="c" style="left:773px;top:6px;letter-spacing:0px"></div>
<div class="c" style="left:969px;top:6px;width:204px;letter-spacing:-0.2px">Category: CBSWebsite.Controllers.ErrorController</div>
</div>
<div class="row" style="top:520px;">
<div class="c r" style="left:0px;width:53px;top:6px;letter-spacing:-0.250px">14</div>
<svg class="ic" style="left:69px;top:3.2px" width="20" height="20" viewBox="0 0 24 24"><path fill="#fbc02d" d="M1 21h22L12 2 1 21zm12-3h-2v-2h2v2zm0-4h-2v-4h2v4z"/></svg>
<div class="c" style="left:105px;top:6px;letter-spacing:-0.220px">Notice</div>
<div class="c r" style="left:190px;width:150px;top:6px;letter-spacing:-0.160px">12/31/2023 1:26:59.297 PM</div>
<div class="c" style="left:356px;top:6px">Hoyt</div>
<div class="c" style="left:409px;top:6px;letter-spacing:0.100px">Application</div>
<div class="c" style="left:485px;top:6px;width:222px;letter-spacing:0px">EvntAgnt</div>
<div class="c r" style="left:710px;width:47px;top:6px;letter-spacing:-0.150px">3007</div>
<div class="c" style="left:773px;top:6px;letter-spacing:0px"></div>
<div class="c" style="left:969px;top:6px;width:204px;letter-spacing:0px">Error opening event log file State. Log will not be processed.</div>
</div>
<div class="row" style="top:546px;">
<div class="c r" style="left:0px;width:53px;top:6px;letter-spacing:-0.250px">10</div>
<svg class="ic" style="left:69px;top:3.2px" width="20" height="20" viewBox="0 0 24 24"><path fill="#fbc02d" d="M1 21h22L12 2 1 21zm12-3h-2v-2h2v2zm0-4h-2v-4h2v4z"/></svg>
<div class="c" style="left:105px;top:6px;letter-spacing:-0.220px">Notice</div>
<div class="c r" style="left:190px;width:150px;top:6px;letter-spacing:-0.160px">1/3/2024 2:18:18.657 PM</div>
<div class="c" style="left:356px;top:6px">Hoyt</div>
<div class="c" style="left:409px;top:6px;letter-spacing:-0.400px">System</div>
<div class="c" style="left:485px;top:6px;width:222px;letter-spacing:0.07px">Microsoft-Windows-DNS-Client</div>
<div class="c r" style="left:710px;width:47px;top:6px;letter-spacing:-0.150px">1014</div>
<div class="c" style="left:773px;top:6px;letter-spacing:0px"></div>
<div class="c" style="left:969px;top:6px;width:204px;letter-spacing:0px">Name resolution for the name s.thebrighttag.com timed out</div>
</div>
<div class="row" style="top:572px;">
<div class="c r" style="left:0px;width:53px;top:6px;letter-spacing:-0.250px">10</div>
<svg class="ic" style="left:69px;top:3.2px" width="20" height="20" viewBox="0 0 24 24"><path fill="#2e9b3a" d="M12.65 10C11.83 7.67 9.61 6 7 6c-3.31 0-6 2.69-6 6s2.69 6 6 6c2.61 0 4.83-1.67 5.65-4H17v4h4v-4h2v-4H12.65zM7 14c-1.1 0-2-.9-2-2s.9-2 2-2 2 .9 2 2-.9 2-2 2z"/></svg>
<div class="c" style="left:105px;top:6px;letter-spacing:-0.220px">Success Audit</div>
<div class="c r" style="left:190px;width:150px;top:6px;letter-spacing:-0.160px">12/29/2023 7:20:21.380 AM</div>
<div class="c" style="left:356px;top:6px">Hoyt</div>
<div class="c" style="left:409px;top:6px;letter-spacing:-0.200px">Security</div>
<div class="c" style="left:485px;top:6px;width:222px;letter-spacing:0.14px">Microsoft-Windows-Security-Auditing</div>
<div class="c r" style="left:710px;width:47px;top:6px;letter-spacing:-0.150px">4663</div>
<div class="c" style="left:773px;top:6px;letter-spacing:-0.41px">File System</div>
<div class="c" style="left:969px;top:6px;width:204px;letter-spacing:0px">An attempt was made to access an object.</div>
</div>
<div class="row" style="top:598px;">
<div class="c r" style="left:0px;width:53px;top:6px;letter-spacing:-0.250px">7</div>
<svg class="ic" style="left:69px;top:3.2px" width="20" height="20" viewBox="0 0 24 24"><path fill="#fbc02d" d="M1 21h22L12 2 1 21zm12-3h-2v-2h2v2zm0-4h-2v-4h2v4z"/></svg>
<div class="c" style="left:105px;top:6px;letter-spacing:-0.220px">Notice</div>
<div class="c r" style="left:190px;width:150px;top:6px;letter-spacing:-0.160px">1/3/2024 6:24:24.147 AM</div>
<div class="c" style="left:356px;top:6px">Hoyt</div>
<div class="c" style="left:409px;top:6px;letter-spacing:-0.400px">System</div>
<div class="c" style="left:485px;top:6px;width:222px;letter-spacing:-1.05px">BTHUSB</div>
<div class="c r" style="left:710px;width:47px;top:6px;letter-spacing:-0.150px">34</div>
<div class="c" style="left:773px;top:6px;letter-spacing:0px"></div>
<div class="c" style="left:969px;top:6px;width:204px;letter-spacing:0px">The local adapter does not support an important Low Energy</div>
</div>
<div class="row" style="top:624px;">
<div class="c r" style="left:0px;width:53px;top:6px;letter-spacing:-0.250px">3</div>
<svg class="ic" style="left:69px;top:3.2px" width="20" height="20" viewBox="0 0 24 24"><path fill="#fbc02d" d="M1 21h22L12 2 1 21zm12-3h-2v-2h2v2zm0-4h-2v-4h2v4z"/></svg>
<div class="c" style="left:105px;top:6px;letter-spacing:-0.220px">Notice</div>
<div class="c r" style="left:190px;width:150px;top:6px;letter-spacing:-0.160px">1/3/2024 6:24:27.520 AM</div>
<div class="c" style="left:356px;top:6px">Hoyt</div>
<div class="c" style="left:409px;top:6px;letter-spacing:-0.400px">System</div>
<div class="c" style="left:485px;top:6px;width:222px;letter-spacing:0.03px">Microsoft-Windows-Time-Service</div>
<div class="c r" style="left:710px;width:47px;top:6px;letter-spacing:-0.150px">134</div>
<div class="c" style="left:773px;top:6px;letter-spacing:0px"></div>
<div class="c" style="left:969px;top:6px;width:204px;letter-spacing:0px">NtpClient was unable to set a manual peer to use as a time source</div>
</div>
<div class="row" style="top:650px;">
<div class="c r" style="left:0px;width:53px;top:6px;letter-spacing:-0.250px">3</div>
<svg class="ic" style="left:69.5px;top:3.7px" width="19" height="19" viewBox="0 0 24 24"><path fill="#d32f2f" d="M12 2C6.47 2 2 6.47 2 12s4.47 10 10 10 10-4.47 10-10S17.53 2 12 2zm5 13.59L15.59 17 12 13.41 8.41 17 7 15.59 10.59 12 7 8.41 8.41 7 12 10.59 15.59 7 17 8.41 13.41 12 17 15.59z"/></svg>
<div class="c" style="left:105px;top:6px;letter-spacing:-0.220px">Error</div>
<div class="c r" style="left:190px;width:150px;top:6px;letter-spacing:-0.160px">1/3/2024 12:22:33.560 PM</div>
<div class="c" style="left:356px;top:6px">Hoyt</div>
<div class="c" style="left:409px;top:6px;letter-spacing:-0.400px">System</div>
<div class="c" style="left:485px;top:6px;width:222px;letter-spacing:0.07px">Microsoft-Windows-DNS-Client</div>
<div class="c r" style="left:710px;width:47px;top:6px;letter-spacing:-0.150px">1012</div>
<div class="c" style="left:773px;top:6px;letter-spacing:0px"></div>
<div class="c" style="left:969px;top:6px;width:204px;letter-spacing:0.07px">There was an error while attempting to read the local hosts file.</div>
</div>
<div class="row" style="top:676px;">
<div class="c r" style="left:0px;width:53px;top:6px;letter-spacing:-0.250px">3</div>
<svg class="ic" style="left:69px;top:3.2px" width="20" height="20" viewBox="0 0 24 24"><path fill="#2e9b3a" d="M12.65 10C11.83 7.67 9.61 6 7 6c-3.31 0-6 2.69-6 6s2.69 6 6 6c2.61 0 4.83-1.67 5.65-4H17v4h4v-4h2v-4H12.65zM7 14c-1.1 0-2-.9-2-2s.9-2 2-2 2 .9 2 2-.9 2-2 2z"/></svg>
<div class="c" style="left:105px;top:6px;letter-spacing:-0.220px">Success Audit</div>
<div class="c r" style="left:190px;width:150px;top:6px;letter-spacing:-0.160px">1/3/2024 12:10:19.417 PM</div>
<div class="c" style="left:356px;top:6px">Hoyt</div>
<div class="c" style="left:409px;top:6px;letter-spacing:-0.200px">Security</div>
<div class="c" style="left:485px;top:6px;width:222px;letter-spacing:0.14px">Microsoft-Windows-Security-Auditing</div>
<div class="c r" style="left:710px;width:47px;top:6px;letter-spacing:-0.150px">6419</div>
<div class="c" style="left:773px;top:6px;letter-spacing:-0.28px">Plug and Play Events</div>
<div class="c" style="left:969px;top:6px;width:204px;letter-spacing:0.07px">A request was made to disable a device.</div>
</div>
</div>
<svg class="ic" style="left:1176px;top:79px" width="11" height="9" viewBox="0 0 11 9"><path d="M1 7l4.500-4.500L10 7" stroke="#777" stroke-width="1.100" fill="none"/></svg>
<svg class="ic" style="left:1176px;top:758px" width="11" height="9" viewBox="0 0 11 9"><path d="M1 2l4.500 4.500L10 2" stroke="#777" stroke-width="1.100" fill="none"/></svg>
<div class="a" style="left:1179px;top:94px;width:5px;height:152px;background:#c2c3c9;border-radius:3px"></div>
<div class="a" style="left:0;top:771px;width:1173px;height:17px;background:#fafafa"></div>
<svg class="ic" style="left:5px;top:774px" width="9" height="11" viewBox="0 0 9 11"><path d="M7 1L2.500 5.500 7 10" stroke="#777" stroke-width="1.100" fill="none"/></svg>
<svg class="ic" style="left:1160px;top:774px" width="9" height="11" viewBox="0 0 9 11"><path d="M2 1l4.500 4.500L2 10" stroke="#777" stroke-width="1.100" fill="none"/></svg>
<div class="a" style="left:17px;top:777px;width:988px;height:5px;background:#c6c7cc;border-radius:2.500px"></div>
</div>
<div class="t" style="left:1560.500px;top:305px;transform-origin:0 0;transform:rotate(90deg);color:#444;letter-spacing:-0.500px">Message</div>
<div class="a" style="left:1564px;top:305px;width:6px;height:47px;background:#c2c3c7"></div>
<div class="t" style="left:358px;top:1092px;color:#555">Verbose Output</div>
<div class="a" style="left:358px;top:1109px;width:84px;height:6px;background:#c1c1c5"></div>
<div class="btn dis" style="left:358px;top:1119px;width:28px">
<svg class="ic" style="left:1px;top:1px" width="24" height="24" viewBox="0 0 24 24"><path fill="#bdbdbd" d="M18.41 16.59L13.82 12l4.59-4.59L17 6l-6 6 6 6zM6 6h2v12H6z"/></svg>
</div>
<div class="btn dis" style="left:390px;top:1119px;width:28px">
<svg class="ic" style="left:1px;top:1px" width="24" height="24" viewBox="0 0 24 24"><path fill="#bdbdbd" d="M15.41 7.41L14 6l-6 6 6 6 1.41-1.41L10.83 12z"/></svg>
</div>
<div class="btn" style="left:422px;top:1119px;width:41px;background:#fff;border-color:#b5b5b5;border-radius:3px"><div class="t" style="left:4.6px;top:6px">7</div><svg class="ic" width="22" height="22" viewBox="0 0 24 24" style="left:16px;top:2.500px"><path fill="#111" d="M7.41 8.59L12 13.17l4.59-4.58L18 10l-6 6-6-6 1.41-1.41z"/></svg></div>
<div class="btn " style="left:467px;top:1119px;width:28px">
<svg class="ic" style="left:1px;top:1px" width="24" height="24" viewBox="0 0 24 24"><path fill="#424242" d="M10 6L8.59 7.41 13.17 12l-4.58 4.59L10 18l6-6z"/></svg>
</div>
<div class="btn " style="left:499px;top:1119px;width:28px">
<svg class="ic" style="left:1px;top:1px" width="24" height="24" viewBox="0 0 24 24"><path fill="#424242" d="M5.59 7.41L10.18 12l-4.59 4.59L7 18l6-6-6-6zM16 6h2v12h-2z"/></svg>
</div>
<div class="a" style="left:0;top:0;width:1585px;height:1192px;border:1px solid #a6a6a6;border-radius:8px;box-shadow:0 0 0 12px #c8c8c8;pointer-events:none"></div>
</body></html>
